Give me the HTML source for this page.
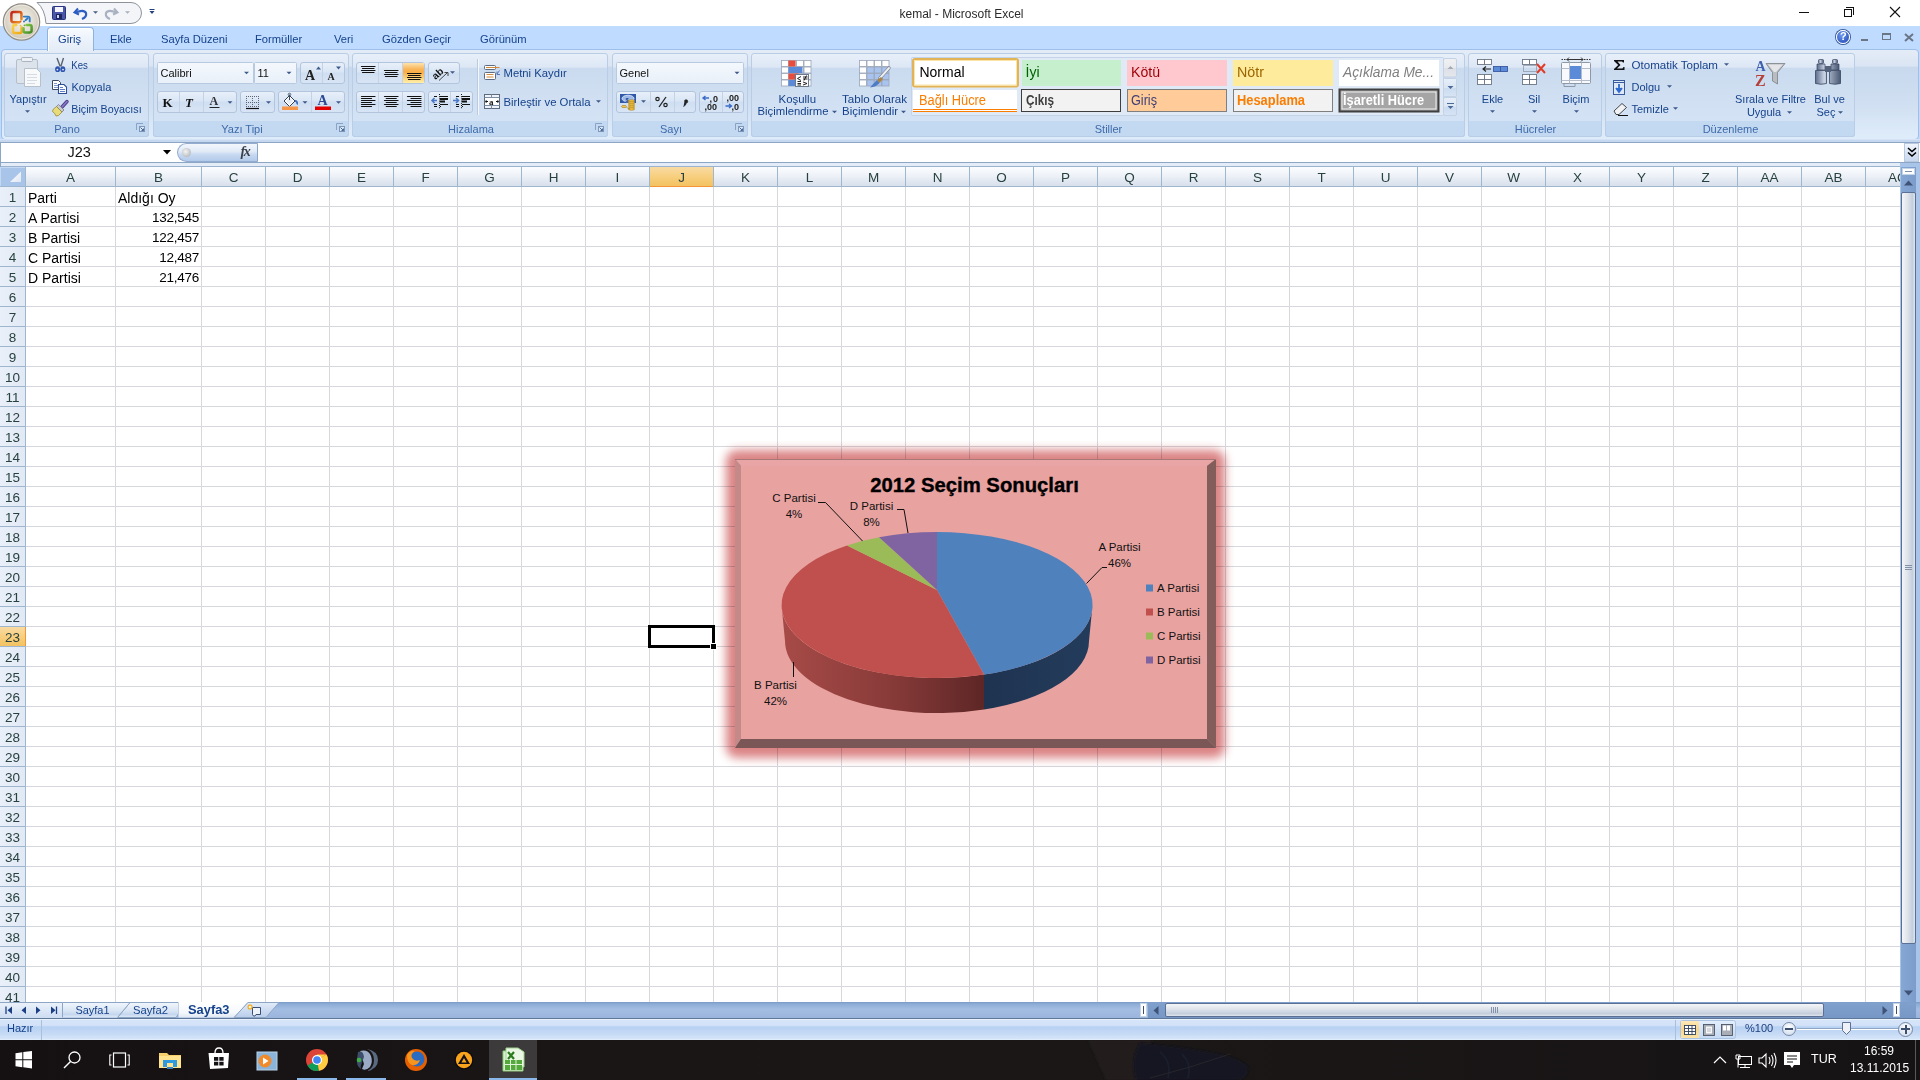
<!DOCTYPE html>
<html><head><meta charset="utf-8"><title>kemal - Microsoft Excel</title>
<style>
*{margin:0;padding:0;box-sizing:border-box}
html,body{width:1920px;height:1080px;overflow:hidden;background:#fff;font-family:"Liberation Sans",sans-serif;}
.a{position:absolute}
.t{position:absolute;white-space:nowrap;line-height:1}
.ui{font-size:11px;color:#15428b}
.grp{border:1px solid #b9cde6;border-radius:3px;background:linear-gradient(#e7eff9 0,#dde7f5 16%,#cbdbef 17.5%,#d2e1f3 70%,#d6e5f6 100%)}
.glab{border:1px solid #b9cde6;border-top:none;border-radius:0 0 3px 3px;background:#c3d9f1}
.hdr{font-size:13.5px;color:#27413e}
.cell{font-size:14px;color:#000}
.num{font-size:13.5px;letter-spacing:-0.25px}

</style></head><body>
<!-- title bar -->
<div class="a" style="left:0;top:0;width:1920px;height:26px;background:#fff"></div>
<!-- QAT capsule -->


<!-- window buttons -->
<div class="a" style="left:1799px;top:12px;width:10px;height:1px;background:#111"></div>
<div class="a" style="left:1844px;top:9px;width:8px;height:8px;border:1px solid #111;"></div>
<div class="a" style="left:1846px;top:7px;width:8px;height:8px;border-top:1px solid #111;border-right:1px solid #111"></div>
<svg class="a" style="left:1889px;top:6px" width="12" height="12"><path d="M1 1L11 11M11 1L1 11" stroke="#111" stroke-width="1.1"/></svg>
<!-- tab strip -->
<div class="a" style="left:0;top:26px;width:1920px;height:24px;background:#bfdbff"></div>
<div class="t ui" style="left:110px;top:34px;font-size:11.2px">Ekle</div>
<div class="t ui" style="left:161px;top:34px;font-size:11.2px">Sayfa Düzeni</div>
<div class="t ui" style="left:255px;top:34px;font-size:11.2px">Formüller</div>
<div class="t ui" style="left:334px;top:34px;font-size:11.2px">Veri</div>
<div class="t ui" style="left:382px;top:34px;font-size:11.2px">Gözden Geçir</div>
<div class="t ui" style="left:480px;top:34px;font-size:11.2px">Görünüm</div>
<!-- right mini buttons -->
<div class="a" style="left:1836px;top:30px;width:14px;height:14px;border-radius:50%;background:radial-gradient(circle at 40% 35%,#6d9cf0,#1a3fb0);border:1px solid #fff;box-shadow:0 0 0 1px #3a5a9a"></div>
<div class="t" style="left:1840px;top:31px;font-size:11px;font-weight:bold;color:#fff">?</div>
<div class="a" style="left:1861px;top:39px;width:7px;height:2px;background:#6a7585"></div>
<div class="a" style="left:1882px;top:33px;width:9px;height:7px;border:1px solid #6a7585;border-top-width:2px"></div>
<svg class="a" style="left:1904px;top:33px" width="10" height="9"><path d="M1 1L9 8M9 1L1 8" stroke="#6a7585" stroke-width="2"/></svg>
<!-- ribbon panel -->
<div class="a" style="left:0;top:49px;width:1920px;height:93px;background:#bfdbff"></div>
<div class="a" style="left:1px;top:49px;width:1918px;height:91px;border:1px solid #9ebfe9;border-radius:4px;background:linear-gradient(#e4ecf7 0,#dae5f3 18%,#c8d9ee 19.5%,#d0dff1 60%,#dfedfb 100%)"></div>
<div class="a" style="left:0;top:139px;width:1920px;height:3px;background:#d4e3f6"></div>
<div class="a" style="left:47px;top:27px;width:47px;height:24px;border:1px solid #8fb3e0;border-bottom:none;border-radius:4px 4px 0 0;background:linear-gradient(#f7fbff,#eaf1fa 60%,#e4ecf7);box-shadow:inset 1px 1px 0 #fff"></div>
<div class="t ui" style="left:58px;top:34px;font-size:11.2px">Giriş</div>
<div class="a grp" style="left:4px;top:53px;width:145px;height:84px"></div>
<div class="a glab" style="left:4px;top:121px;width:145px;height:16px"></div>
<div class="t ui" style="left:7px;top:124px;width:120px;text-align:center;color:#3e6aaa;font-size:11px">Pano</div>
<svg class="a" style="left:136px;top:123px" width="9" height="9"><path d="M0.5 7V0.5H7" fill="none" stroke="#8aa3c4"/><rect x="3.5" y="3.5" width="5" height="5" fill="#dce7f5" stroke="#7d97bb"/><path d="M4.5 4.5L7.5 7.5M7.5 5.5V7.5H5.5" fill="none" stroke="#4a6a9a"/></svg>
<div class="a grp" style="left:153px;top:53px;width:196px;height:84px"></div>
<div class="a glab" style="left:153px;top:121px;width:196px;height:16px"></div>
<div class="t ui" style="left:182px;top:124px;width:120px;text-align:center;color:#3e6aaa;font-size:11px">Yazı Tipi</div>
<svg class="a" style="left:336px;top:123px" width="9" height="9"><path d="M0.5 7V0.5H7" fill="none" stroke="#8aa3c4"/><rect x="3.5" y="3.5" width="5" height="5" fill="#dce7f5" stroke="#7d97bb"/><path d="M4.5 4.5L7.5 7.5M7.5 5.5V7.5H5.5" fill="none" stroke="#4a6a9a"/></svg>
<div class="a grp" style="left:352px;top:53px;width:256px;height:84px"></div>
<div class="a glab" style="left:352px;top:121px;width:256px;height:16px"></div>
<div class="t ui" style="left:411px;top:124px;width:120px;text-align:center;color:#3e6aaa;font-size:11px">Hizalama</div>
<svg class="a" style="left:595px;top:123px" width="9" height="9"><path d="M0.5 7V0.5H7" fill="none" stroke="#8aa3c4"/><rect x="3.5" y="3.5" width="5" height="5" fill="#dce7f5" stroke="#7d97bb"/><path d="M4.5 4.5L7.5 7.5M7.5 5.5V7.5H5.5" fill="none" stroke="#4a6a9a"/></svg>
<div class="a grp" style="left:612px;top:53px;width:136px;height:84px"></div>
<div class="a glab" style="left:612px;top:121px;width:136px;height:16px"></div>
<div class="t ui" style="left:611px;top:124px;width:120px;text-align:center;color:#3e6aaa;font-size:11px">Sayı</div>
<svg class="a" style="left:735px;top:123px" width="9" height="9"><path d="M0.5 7V0.5H7" fill="none" stroke="#8aa3c4"/><rect x="3.5" y="3.5" width="5" height="5" fill="#dce7f5" stroke="#7d97bb"/><path d="M4.5 4.5L7.5 7.5M7.5 5.5V7.5H5.5" fill="none" stroke="#4a6a9a"/></svg>
<div class="a grp" style="left:751px;top:53px;width:714px;height:84px"></div>
<div class="a glab" style="left:751px;top:121px;width:714px;height:16px"></div>
<div class="t ui" style="left:1048.5px;top:124px;width:120px;text-align:center;color:#3e6aaa;font-size:11px">Stiller</div>
<div class="a grp" style="left:1468px;top:53px;width:134px;height:84px"></div>
<div class="a glab" style="left:1468px;top:121px;width:134px;height:16px"></div>
<div class="t ui" style="left:1475.5px;top:124px;width:120px;text-align:center;color:#3e6aaa;font-size:11px">Hücreler</div>
<div class="a grp" style="left:1605px;top:53px;width:250px;height:84px"></div>
<div class="a glab" style="left:1605px;top:121px;width:250px;height:16px"></div>
<div class="t ui" style="left:1670.5px;top:124px;width:120px;text-align:center;color:#3e6aaa;font-size:11px">Düzenleme</div>
<!-- formula bar -->
<div class="a" style="left:0;top:140px;width:1920px;height:27px;background:#c5d8ef"></div>
<div class="a" style="left:0;top:142px;width:1920px;height:21px;background:#fff;border-top:1px solid #8ea6c5;border-bottom:1px solid #8ea6c5"></div>
<div class="a" style="left:0;top:163px;width:1920px;height:4px;background:#e3ecf7;border-bottom:1px solid #9cb3cf"></div>
<div class="t" style="left:67.5px;top:145px;font-size:14.5px;color:#111">J23</div>
<div class="a" style="left:0;top:142px;width:1px;height:25px;background:#8ea6c5"></div>
<svg class="a" style="left:163px;top:150px" width="9" height="5"><path d="M0 0H8L4 4.5Z" fill="#000"/></svg>
<div class="a" style="left:177px;top:143px;width:81px;height:19px;border-radius:10px 0 0 10px;border:1px solid #93acd0;border-right:1px solid #8ca6c8;background:linear-gradient(#f3f7fc,#e0eaf7 45%,#c9daf1 60%,#b2caeb)"></div>
<div class="a" style="left:182px;top:148px;width:9px;height:9px;border-radius:50%;background:radial-gradient(circle at 40% 40%,#f4f4f4,#a4a9ae)"></div>
<div class="t" style="left:240.5px;top:145px;font-family:'Liberation Serif',serif;font-style:italic;font-weight:bold;font-size:14px;color:#3a3f48;letter-spacing:-1.5px">fx</div>
<div class="a" style="left:1904px;top:143px;width:15px;height:19px;border:1px solid #b8c9df;background:linear-gradient(#f0f5fb,#c8d8ee)"></div>
<svg class="a" style="left:1907px;top:147px" width="10" height="11"><path d="M1 1L5 4.5L9 1M1 5.5L5 9L9 5.5" fill="none" stroke="#000" stroke-width="1.6"/></svg>
<div class="a" style="left:0;top:167px;width:1900px;height:20px;background:linear-gradient(#fbfcfe,#eef2f8 45%,#dfe6f0 80%,#d8e0ec);border-bottom:1px solid #9eb6ce"></div>
<div class="a" style="left:0;top:167px;width:26px;height:20px;background:#a9c4e9;border-right:1px solid #9eb6ce;border-bottom:1px solid #9eb6ce;box-shadow:inset 1px 1px 0 #c5d8f3"></div>
<svg class="a" style="left:9px;top:171px" width="13" height="12"><defs><linearGradient id="cg" x1="0" y1="0" x2="1" y2="1"><stop offset="0" stop-color="#fff"/><stop offset="1" stop-color="#dfe6f2"/></linearGradient></defs><path d="M12 0.5V11H1Z" fill="url(#cg)"/></svg>
<div class="a" style="left:26px;top:187px;width:1874px;height:815px;background:#fff"></div>
<div class="a" style="left:115px;top:167px;width:1px;height:20px;background:#9eb6ce"></div>
<div class="t hdr" style="left:26px;top:171px;width:89px;text-align:center">A</div>
<div class="a" style="left:115px;top:187px;width:1px;height:815px;background:#d6d8de"></div>
<div class="a" style="left:201px;top:167px;width:1px;height:20px;background:#9eb6ce"></div>
<div class="t hdr" style="left:116px;top:171px;width:85px;text-align:center">B</div>
<div class="a" style="left:201px;top:187px;width:1px;height:815px;background:#d6d8de"></div>
<div class="a" style="left:265px;top:167px;width:1px;height:20px;background:#9eb6ce"></div>
<div class="t hdr" style="left:202px;top:171px;width:63px;text-align:center">C</div>
<div class="a" style="left:265px;top:187px;width:1px;height:815px;background:#d6d8de"></div>
<div class="a" style="left:329px;top:167px;width:1px;height:20px;background:#9eb6ce"></div>
<div class="t hdr" style="left:266px;top:171px;width:63px;text-align:center">D</div>
<div class="a" style="left:329px;top:187px;width:1px;height:815px;background:#d6d8de"></div>
<div class="a" style="left:393px;top:167px;width:1px;height:20px;background:#9eb6ce"></div>
<div class="t hdr" style="left:330px;top:171px;width:63px;text-align:center">E</div>
<div class="a" style="left:393px;top:187px;width:1px;height:815px;background:#d6d8de"></div>
<div class="a" style="left:457px;top:167px;width:1px;height:20px;background:#9eb6ce"></div>
<div class="t hdr" style="left:394px;top:171px;width:63px;text-align:center">F</div>
<div class="a" style="left:457px;top:187px;width:1px;height:815px;background:#d6d8de"></div>
<div class="a" style="left:521px;top:167px;width:1px;height:20px;background:#9eb6ce"></div>
<div class="t hdr" style="left:458px;top:171px;width:63px;text-align:center">G</div>
<div class="a" style="left:521px;top:187px;width:1px;height:815px;background:#d6d8de"></div>
<div class="a" style="left:585px;top:167px;width:1px;height:20px;background:#9eb6ce"></div>
<div class="t hdr" style="left:522px;top:171px;width:63px;text-align:center">H</div>
<div class="a" style="left:585px;top:187px;width:1px;height:815px;background:#d6d8de"></div>
<div class="a" style="left:649px;top:167px;width:1px;height:20px;background:#9eb6ce"></div>
<div class="t hdr" style="left:586px;top:171px;width:63px;text-align:center">I</div>
<div class="a" style="left:649px;top:187px;width:1px;height:815px;background:#d6d8de"></div>
<div class="a" style="left:650px;top:167px;width:63px;height:19px;background:linear-gradient(#f9dba3,#f7cf7f 50%,#f3c262);"></div>
<div class="a" style="left:650px;top:186px;width:63px;height:1px;background:#f29536"></div>
<div class="a" style="left:713px;top:167px;width:1px;height:20px;background:#9eb6ce"></div>
<div class="t hdr" style="left:650px;top:171px;width:63px;text-align:center">J</div>
<div class="a" style="left:713px;top:187px;width:1px;height:815px;background:#d6d8de"></div>
<div class="a" style="left:777px;top:167px;width:1px;height:20px;background:#9eb6ce"></div>
<div class="t hdr" style="left:714px;top:171px;width:63px;text-align:center">K</div>
<div class="a" style="left:777px;top:187px;width:1px;height:815px;background:#d6d8de"></div>
<div class="a" style="left:841px;top:167px;width:1px;height:20px;background:#9eb6ce"></div>
<div class="t hdr" style="left:778px;top:171px;width:63px;text-align:center">L</div>
<div class="a" style="left:841px;top:187px;width:1px;height:815px;background:#d6d8de"></div>
<div class="a" style="left:905px;top:167px;width:1px;height:20px;background:#9eb6ce"></div>
<div class="t hdr" style="left:842px;top:171px;width:63px;text-align:center">M</div>
<div class="a" style="left:905px;top:187px;width:1px;height:815px;background:#d6d8de"></div>
<div class="a" style="left:969px;top:167px;width:1px;height:20px;background:#9eb6ce"></div>
<div class="t hdr" style="left:906px;top:171px;width:63px;text-align:center">N</div>
<div class="a" style="left:969px;top:187px;width:1px;height:815px;background:#d6d8de"></div>
<div class="a" style="left:1033px;top:167px;width:1px;height:20px;background:#9eb6ce"></div>
<div class="t hdr" style="left:970px;top:171px;width:63px;text-align:center">O</div>
<div class="a" style="left:1033px;top:187px;width:1px;height:815px;background:#d6d8de"></div>
<div class="a" style="left:1097px;top:167px;width:1px;height:20px;background:#9eb6ce"></div>
<div class="t hdr" style="left:1034px;top:171px;width:63px;text-align:center">P</div>
<div class="a" style="left:1097px;top:187px;width:1px;height:815px;background:#d6d8de"></div>
<div class="a" style="left:1161px;top:167px;width:1px;height:20px;background:#9eb6ce"></div>
<div class="t hdr" style="left:1098px;top:171px;width:63px;text-align:center">Q</div>
<div class="a" style="left:1161px;top:187px;width:1px;height:815px;background:#d6d8de"></div>
<div class="a" style="left:1225px;top:167px;width:1px;height:20px;background:#9eb6ce"></div>
<div class="t hdr" style="left:1162px;top:171px;width:63px;text-align:center">R</div>
<div class="a" style="left:1225px;top:187px;width:1px;height:815px;background:#d6d8de"></div>
<div class="a" style="left:1289px;top:167px;width:1px;height:20px;background:#9eb6ce"></div>
<div class="t hdr" style="left:1226px;top:171px;width:63px;text-align:center">S</div>
<div class="a" style="left:1289px;top:187px;width:1px;height:815px;background:#d6d8de"></div>
<div class="a" style="left:1353px;top:167px;width:1px;height:20px;background:#9eb6ce"></div>
<div class="t hdr" style="left:1290px;top:171px;width:63px;text-align:center">T</div>
<div class="a" style="left:1353px;top:187px;width:1px;height:815px;background:#d6d8de"></div>
<div class="a" style="left:1417px;top:167px;width:1px;height:20px;background:#9eb6ce"></div>
<div class="t hdr" style="left:1354px;top:171px;width:63px;text-align:center">U</div>
<div class="a" style="left:1417px;top:187px;width:1px;height:815px;background:#d6d8de"></div>
<div class="a" style="left:1481px;top:167px;width:1px;height:20px;background:#9eb6ce"></div>
<div class="t hdr" style="left:1418px;top:171px;width:63px;text-align:center">V</div>
<div class="a" style="left:1481px;top:187px;width:1px;height:815px;background:#d6d8de"></div>
<div class="a" style="left:1545px;top:167px;width:1px;height:20px;background:#9eb6ce"></div>
<div class="t hdr" style="left:1482px;top:171px;width:63px;text-align:center">W</div>
<div class="a" style="left:1545px;top:187px;width:1px;height:815px;background:#d6d8de"></div>
<div class="a" style="left:1609px;top:167px;width:1px;height:20px;background:#9eb6ce"></div>
<div class="t hdr" style="left:1546px;top:171px;width:63px;text-align:center">X</div>
<div class="a" style="left:1609px;top:187px;width:1px;height:815px;background:#d6d8de"></div>
<div class="a" style="left:1673px;top:167px;width:1px;height:20px;background:#9eb6ce"></div>
<div class="t hdr" style="left:1610px;top:171px;width:63px;text-align:center">Y</div>
<div class="a" style="left:1673px;top:187px;width:1px;height:815px;background:#d6d8de"></div>
<div class="a" style="left:1737px;top:167px;width:1px;height:20px;background:#9eb6ce"></div>
<div class="t hdr" style="left:1674px;top:171px;width:63px;text-align:center">Z</div>
<div class="a" style="left:1737px;top:187px;width:1px;height:815px;background:#d6d8de"></div>
<div class="a" style="left:1801px;top:167px;width:1px;height:20px;background:#9eb6ce"></div>
<div class="t hdr" style="left:1738px;top:171px;width:63px;text-align:center">AA</div>
<div class="a" style="left:1801px;top:187px;width:1px;height:815px;background:#d6d8de"></div>
<div class="a" style="left:1865px;top:167px;width:1px;height:20px;background:#9eb6ce"></div>
<div class="t hdr" style="left:1802px;top:171px;width:63px;text-align:center">AB</div>
<div class="a" style="left:1865px;top:187px;width:1px;height:815px;background:#d6d8de"></div>
<div class="a" style="left:1929px;top:167px;width:1px;height:20px;background:#9eb6ce"></div>
<div class="t hdr" style="left:1866px;top:171px;width:63px;text-align:center">AC</div>
<div class="a" style="left:1929px;top:187px;width:1px;height:815px;background:#d6d8de"></div>
<div class="a" style="left:0;top:187px;width:26px;height:815px;background:linear-gradient(90deg,#eaf0f9,#e1e9f5);border-right:1px solid #9eb6ce"></div>
<div class="a" style="left:0;top:206px;width:25px;height:1px;background:#9eb6ce"></div>
<div class="a" style="left:26px;top:206px;width:1874px;height:1px;background:#d6d8de"></div>
<div class="t hdr" style="left:0;top:191px;width:25px;text-align:center">1</div>
<div class="a" style="left:0;top:226px;width:25px;height:1px;background:#9eb6ce"></div>
<div class="a" style="left:26px;top:226px;width:1874px;height:1px;background:#d6d8de"></div>
<div class="t hdr" style="left:0;top:211px;width:25px;text-align:center">2</div>
<div class="a" style="left:0;top:246px;width:25px;height:1px;background:#9eb6ce"></div>
<div class="a" style="left:26px;top:246px;width:1874px;height:1px;background:#d6d8de"></div>
<div class="t hdr" style="left:0;top:231px;width:25px;text-align:center">3</div>
<div class="a" style="left:0;top:266px;width:25px;height:1px;background:#9eb6ce"></div>
<div class="a" style="left:26px;top:266px;width:1874px;height:1px;background:#d6d8de"></div>
<div class="t hdr" style="left:0;top:251px;width:25px;text-align:center">4</div>
<div class="a" style="left:0;top:286px;width:25px;height:1px;background:#9eb6ce"></div>
<div class="a" style="left:26px;top:286px;width:1874px;height:1px;background:#d6d8de"></div>
<div class="t hdr" style="left:0;top:271px;width:25px;text-align:center">5</div>
<div class="a" style="left:0;top:306px;width:25px;height:1px;background:#9eb6ce"></div>
<div class="a" style="left:26px;top:306px;width:1874px;height:1px;background:#d6d8de"></div>
<div class="t hdr" style="left:0;top:291px;width:25px;text-align:center">6</div>
<div class="a" style="left:0;top:326px;width:25px;height:1px;background:#9eb6ce"></div>
<div class="a" style="left:26px;top:326px;width:1874px;height:1px;background:#d6d8de"></div>
<div class="t hdr" style="left:0;top:311px;width:25px;text-align:center">7</div>
<div class="a" style="left:0;top:346px;width:25px;height:1px;background:#9eb6ce"></div>
<div class="a" style="left:26px;top:346px;width:1874px;height:1px;background:#d6d8de"></div>
<div class="t hdr" style="left:0;top:331px;width:25px;text-align:center">8</div>
<div class="a" style="left:0;top:366px;width:25px;height:1px;background:#9eb6ce"></div>
<div class="a" style="left:26px;top:366px;width:1874px;height:1px;background:#d6d8de"></div>
<div class="t hdr" style="left:0;top:351px;width:25px;text-align:center">9</div>
<div class="a" style="left:0;top:386px;width:25px;height:1px;background:#9eb6ce"></div>
<div class="a" style="left:26px;top:386px;width:1874px;height:1px;background:#d6d8de"></div>
<div class="t hdr" style="left:0;top:371px;width:25px;text-align:center">10</div>
<div class="a" style="left:0;top:406px;width:25px;height:1px;background:#9eb6ce"></div>
<div class="a" style="left:26px;top:406px;width:1874px;height:1px;background:#d6d8de"></div>
<div class="t hdr" style="left:0;top:391px;width:25px;text-align:center">11</div>
<div class="a" style="left:0;top:426px;width:25px;height:1px;background:#9eb6ce"></div>
<div class="a" style="left:26px;top:426px;width:1874px;height:1px;background:#d6d8de"></div>
<div class="t hdr" style="left:0;top:411px;width:25px;text-align:center">12</div>
<div class="a" style="left:0;top:446px;width:25px;height:1px;background:#9eb6ce"></div>
<div class="a" style="left:26px;top:446px;width:1874px;height:1px;background:#d6d8de"></div>
<div class="t hdr" style="left:0;top:431px;width:25px;text-align:center">13</div>
<div class="a" style="left:0;top:466px;width:25px;height:1px;background:#9eb6ce"></div>
<div class="a" style="left:26px;top:466px;width:1874px;height:1px;background:#d6d8de"></div>
<div class="t hdr" style="left:0;top:451px;width:25px;text-align:center">14</div>
<div class="a" style="left:0;top:486px;width:25px;height:1px;background:#9eb6ce"></div>
<div class="a" style="left:26px;top:486px;width:1874px;height:1px;background:#d6d8de"></div>
<div class="t hdr" style="left:0;top:471px;width:25px;text-align:center">15</div>
<div class="a" style="left:0;top:506px;width:25px;height:1px;background:#9eb6ce"></div>
<div class="a" style="left:26px;top:506px;width:1874px;height:1px;background:#d6d8de"></div>
<div class="t hdr" style="left:0;top:491px;width:25px;text-align:center">16</div>
<div class="a" style="left:0;top:526px;width:25px;height:1px;background:#9eb6ce"></div>
<div class="a" style="left:26px;top:526px;width:1874px;height:1px;background:#d6d8de"></div>
<div class="t hdr" style="left:0;top:511px;width:25px;text-align:center">17</div>
<div class="a" style="left:0;top:546px;width:25px;height:1px;background:#9eb6ce"></div>
<div class="a" style="left:26px;top:546px;width:1874px;height:1px;background:#d6d8de"></div>
<div class="t hdr" style="left:0;top:531px;width:25px;text-align:center">18</div>
<div class="a" style="left:0;top:566px;width:25px;height:1px;background:#9eb6ce"></div>
<div class="a" style="left:26px;top:566px;width:1874px;height:1px;background:#d6d8de"></div>
<div class="t hdr" style="left:0;top:551px;width:25px;text-align:center">19</div>
<div class="a" style="left:0;top:586px;width:25px;height:1px;background:#9eb6ce"></div>
<div class="a" style="left:26px;top:586px;width:1874px;height:1px;background:#d6d8de"></div>
<div class="t hdr" style="left:0;top:571px;width:25px;text-align:center">20</div>
<div class="a" style="left:0;top:606px;width:25px;height:1px;background:#9eb6ce"></div>
<div class="a" style="left:26px;top:606px;width:1874px;height:1px;background:#d6d8de"></div>
<div class="t hdr" style="left:0;top:591px;width:25px;text-align:center">21</div>
<div class="a" style="left:0;top:626px;width:25px;height:1px;background:#9eb6ce"></div>
<div class="a" style="left:26px;top:626px;width:1874px;height:1px;background:#d6d8de"></div>
<div class="t hdr" style="left:0;top:611px;width:25px;text-align:center">22</div>
<div class="a" style="left:0;top:627px;width:25px;height:19px;background:linear-gradient(#f9dba3,#f7cf7f 50%,#f3c262)"></div>
<div class="a" style="left:25px;top:627px;width:1px;height:19px;background:#f29536"></div>
<div class="a" style="left:0;top:646px;width:25px;height:1px;background:#9eb6ce"></div>
<div class="a" style="left:26px;top:646px;width:1874px;height:1px;background:#d6d8de"></div>
<div class="t hdr" style="left:0;top:631px;width:25px;text-align:center">23</div>
<div class="a" style="left:0;top:666px;width:25px;height:1px;background:#9eb6ce"></div>
<div class="a" style="left:26px;top:666px;width:1874px;height:1px;background:#d6d8de"></div>
<div class="t hdr" style="left:0;top:651px;width:25px;text-align:center">24</div>
<div class="a" style="left:0;top:686px;width:25px;height:1px;background:#9eb6ce"></div>
<div class="a" style="left:26px;top:686px;width:1874px;height:1px;background:#d6d8de"></div>
<div class="t hdr" style="left:0;top:671px;width:25px;text-align:center">25</div>
<div class="a" style="left:0;top:706px;width:25px;height:1px;background:#9eb6ce"></div>
<div class="a" style="left:26px;top:706px;width:1874px;height:1px;background:#d6d8de"></div>
<div class="t hdr" style="left:0;top:691px;width:25px;text-align:center">26</div>
<div class="a" style="left:0;top:726px;width:25px;height:1px;background:#9eb6ce"></div>
<div class="a" style="left:26px;top:726px;width:1874px;height:1px;background:#d6d8de"></div>
<div class="t hdr" style="left:0;top:711px;width:25px;text-align:center">27</div>
<div class="a" style="left:0;top:746px;width:25px;height:1px;background:#9eb6ce"></div>
<div class="a" style="left:26px;top:746px;width:1874px;height:1px;background:#d6d8de"></div>
<div class="t hdr" style="left:0;top:731px;width:25px;text-align:center">28</div>
<div class="a" style="left:0;top:766px;width:25px;height:1px;background:#9eb6ce"></div>
<div class="a" style="left:26px;top:766px;width:1874px;height:1px;background:#d6d8de"></div>
<div class="t hdr" style="left:0;top:751px;width:25px;text-align:center">29</div>
<div class="a" style="left:0;top:786px;width:25px;height:1px;background:#9eb6ce"></div>
<div class="a" style="left:26px;top:786px;width:1874px;height:1px;background:#d6d8de"></div>
<div class="t hdr" style="left:0;top:771px;width:25px;text-align:center">30</div>
<div class="a" style="left:0;top:806px;width:25px;height:1px;background:#9eb6ce"></div>
<div class="a" style="left:26px;top:806px;width:1874px;height:1px;background:#d6d8de"></div>
<div class="t hdr" style="left:0;top:791px;width:25px;text-align:center">31</div>
<div class="a" style="left:0;top:826px;width:25px;height:1px;background:#9eb6ce"></div>
<div class="a" style="left:26px;top:826px;width:1874px;height:1px;background:#d6d8de"></div>
<div class="t hdr" style="left:0;top:811px;width:25px;text-align:center">32</div>
<div class="a" style="left:0;top:846px;width:25px;height:1px;background:#9eb6ce"></div>
<div class="a" style="left:26px;top:846px;width:1874px;height:1px;background:#d6d8de"></div>
<div class="t hdr" style="left:0;top:831px;width:25px;text-align:center">33</div>
<div class="a" style="left:0;top:866px;width:25px;height:1px;background:#9eb6ce"></div>
<div class="a" style="left:26px;top:866px;width:1874px;height:1px;background:#d6d8de"></div>
<div class="t hdr" style="left:0;top:851px;width:25px;text-align:center">34</div>
<div class="a" style="left:0;top:886px;width:25px;height:1px;background:#9eb6ce"></div>
<div class="a" style="left:26px;top:886px;width:1874px;height:1px;background:#d6d8de"></div>
<div class="t hdr" style="left:0;top:871px;width:25px;text-align:center">35</div>
<div class="a" style="left:0;top:906px;width:25px;height:1px;background:#9eb6ce"></div>
<div class="a" style="left:26px;top:906px;width:1874px;height:1px;background:#d6d8de"></div>
<div class="t hdr" style="left:0;top:891px;width:25px;text-align:center">36</div>
<div class="a" style="left:0;top:926px;width:25px;height:1px;background:#9eb6ce"></div>
<div class="a" style="left:26px;top:926px;width:1874px;height:1px;background:#d6d8de"></div>
<div class="t hdr" style="left:0;top:911px;width:25px;text-align:center">37</div>
<div class="a" style="left:0;top:946px;width:25px;height:1px;background:#9eb6ce"></div>
<div class="a" style="left:26px;top:946px;width:1874px;height:1px;background:#d6d8de"></div>
<div class="t hdr" style="left:0;top:931px;width:25px;text-align:center">38</div>
<div class="a" style="left:0;top:966px;width:25px;height:1px;background:#9eb6ce"></div>
<div class="a" style="left:26px;top:966px;width:1874px;height:1px;background:#d6d8de"></div>
<div class="t hdr" style="left:0;top:951px;width:25px;text-align:center">39</div>
<div class="a" style="left:0;top:986px;width:25px;height:1px;background:#9eb6ce"></div>
<div class="a" style="left:26px;top:986px;width:1874px;height:1px;background:#d6d8de"></div>
<div class="t hdr" style="left:0;top:971px;width:25px;text-align:center">40</div>
<div class="t hdr" style="left:0;top:991px;width:25px;text-align:center">41</div>
<div class="t cell" style="left:28px;top:191px">Parti</div>
<div class="t cell" style="left:118px;top:191px">Aldığı Oy</div>
<div class="t cell" style="left:28px;top:211px">A Partisi</div>
<div class="t cell" style="left:28px;top:231px">B Partisi</div>
<div class="t cell" style="left:28px;top:251px">C Partisi</div>
<div class="t cell" style="left:28px;top:271px">D Partisi</div>
<div class="t cell num" style="left:115px;width:84px;text-align:right;top:211px">132,545</div>
<div class="t cell num" style="left:115px;width:84px;text-align:right;top:231px">122,457</div>
<div class="t cell num" style="left:115px;width:84px;text-align:right;top:251px">12,487</div>
<div class="t cell num" style="left:115px;width:84px;text-align:right;top:271px">21,476</div>
<!-- selection J23 -->
<div class="a" style="left:648px;top:625px;width:67px;height:23px;border:3px solid #000"></div>
<div class="a" style="left:710px;top:643px;width:7px;height:7px;background:#fff"></div>
<div class="a" style="left:711px;top:644px;width:5px;height:5px;background:#000"></div>
<!-- clip header overflow / vertical scrollbar -->
<div class="a" style="left:1900px;top:163px;width:20px;height:855px;background:#a9c4e9"></div>
<div class="a" style="left:1901px;top:167px;width:15px;height:835px;background:linear-gradient(90deg,#86a6d4,#7c9ccb)"></div>
<div class="a" style="left:1902px;top:168px;width:13px;height:7px;background:#fff;border:1px solid #c6d4e6"></div>
<div class="a" style="left:1905px;top:171px;width:7px;height:1px;background:#7d8ea8"></div>
<svg class="a" style="left:1904px;top:180px" width="10" height="6"><path d="M0 5.5L4.5 0.5L9 5.5Z" fill="#3f5377"/></svg>
<div class="a" style="left:1901px;top:192px;width:15px;height:752px;border:1px solid #5c7093;border-radius:2px;background:linear-gradient(90deg,#f3f5f8,#e0e5ec 40%,#c4cedc 80%,#dfe5ee)"></div>
<div class="a" style="left:1905px;top:565px;width:7px;height:6px;background:repeating-linear-gradient(#8392a8 0 1px,transparent 1px 2px)"></div>
<svg class="a" style="left:1904px;top:990px" width="10" height="6"><path d="M0 0.5L4.5 5.5L9 0.5Z" fill="#3f5377"/></svg>
<!-- sheet tab bar -->
<div class="a" style="left:0;top:1002px;width:1920px;height:17px;background:linear-gradient(#7b99c6 0,#8cacd6 12%,#a3bde2 45%,#9bb4dc 100%);border-bottom:1px solid #5f7799"></div>
<div class="a" style="left:0;top:1002px;width:63px;height:16px;background:linear-gradient(#eaf1fa,#cddcf1);border-top:1px solid #8ea6c5"></div>
<svg class="a" style="left:5px;top:1006px" width="58" height="9"><path d="M1 0.5V8" stroke="#1a3f85" stroke-width="1.3"/><path d="M7 0.5L2.5 4.25L7 8Z" fill="#1a3f85"/><path d="M21 0.5L16.5 4.25L21 8Z" fill="#1a3f85"/><path d="M31 0.5L35.5 4.25L31 8Z" fill="#1a3f85"/><path d="M46 0.5L50.5 4.25L46 8Z" fill="#1a3f85"/><path d="M51.5 0.5V8" stroke="#1a3f85" stroke-width="1.3"/></svg>
<svg class="a" style="left:0;top:995px" width="300" height="25" viewBox="0 995 300 25" font-family="Liberation Sans, sans-serif">
<defs><linearGradient id="tg" x1="0" y1="0" x2="0" y2="1"><stop offset="0" stop-color="#f1f6fc"/><stop offset="0.55" stop-color="#d9e5f4"/><stop offset="0.8" stop-color="#c5d6ee"/><stop offset="1" stop-color="#e0ebf8"/></linearGradient>
<linearGradient id="ag" x1="0" y1="0" x2="0" y2="1"><stop offset="0" stop-color="#ffffff"/><stop offset="0.7" stop-color="#f4f7fb"/><stop offset="1" stop-color="#dfe7f2"/></linearGradient>
<linearGradient id="ng" x1="0" y1="0" x2="0" y2="1"><stop offset="0" stop-color="#e2ecf9"/><stop offset="1" stop-color="#b9cdea"/></linearGradient></defs>
<path d="M130 1002.5H178.5V1014L176 1017.5H117.5Z" fill="url(#tg)" stroke="#8ea6c5"/>
<path d="M62.5 1017.5V1002.5H130L117.5 1017.5" fill="url(#tg)" stroke="#8ea6c5"/>
<path d="M247.5 1002.5H279L266 1017.5H234Z" fill="url(#ng)" stroke="#8ea6c5"/>
<path d="M178.5 1002H248L234 1017.5H178.5Z" fill="url(#ag)"/>
<path d="M248 1002.5L234 1017.5" stroke="#8ea6c5"/>
<text x="75.5" y="1014.3" font-size="11.5" fill="#15428b" textLength="34" lengthAdjust="spacingAndGlyphs">Sayfa1</text>
<text x="133" y="1014.3" font-size="11.5" fill="#15428b" textLength="35" lengthAdjust="spacingAndGlyphs">Sayfa2</text>
<text x="188" y="1014.3" font-size="12" font-weight="bold" fill="#15428b" textLength="41.5" lengthAdjust="spacingAndGlyphs">Sayfa3</text>
</svg>
<svg class="a" style="left:246px;top:1003px" width="20" height="15"><path d="M6.5 4.5H14.5V11.5H10L9 13H7.5L6.5 11.5Z" fill="#eef3fa" stroke="#3b4f74"/><path d="M4 1V7M1 4H7M2 2L6 6M6 2L2 6" stroke="#f2a81d" stroke-width="1.1"/><circle cx="4" cy="4" r="1.3" fill="#fff6c0"/></svg>
<!-- horizontal scrollbar -->
<div class="a" style="left:1140px;top:1003px;width:7px;height:14px;background:#fff;border:1px solid #c6d4e6"></div>
<div class="a" style="left:1143px;top:1006px;width:1px;height:8px;background:#3c4f6e"></div>
<div class="a" style="left:1148px;top:1003px;width:768px;height:15px;background:linear-gradient(#7f9fcc,#7797c6)"></div>
<svg class="a" style="left:1153px;top:1006px" width="6" height="9"><path d="M5.5 0L0.5 4.5L5.5 9Z" fill="#3f5377"/></svg>
<div class="a" style="left:1165px;top:1003px;width:659px;height:14px;border:1px solid #5c7093;border-radius:2px;background:linear-gradient(#f3f5f8,#e0e5ec 40%,#c4cedc 80%,#dfe5ee)"></div>
<div class="a" style="left:1491px;top:1007px;width:7px;height:6px;background:repeating-linear-gradient(90deg,#8392a8 0 1px,transparent 1px 2px)"></div>
<svg class="a" style="left:1882px;top:1006px" width="6" height="9"><path d="M0.5 0L5.5 4.5L0.5 9Z" fill="#3f5377"/></svg>
<div class="a" style="left:1893px;top:1003px;width:7px;height:14px;background:#fff;border:1px solid #c6d4e6"></div>
<div class="a" style="left:1896px;top:1006px;width:1px;height:8px;background:#3c4f6e"></div>
<!-- status bar -->
<div class="a" style="left:0;top:1019px;width:1920px;height:21px;background:linear-gradient(#f4fbff 0,#d6e4f9 6%,#d3e2f8 30%,#b7d1f3 38%,#c6daf5 70%,#d5e5f9 94%,#e4f0fd 100%)"></div>
<div class="t" style="left:7px;top:1023px;font-size:11px;color:#15428b">Hazır</div>
<div class="a" style="left:41px;top:1020px;width:1px;height:20px;background:#a9c0dd"></div>
<div class="a" style="left:1675px;top:1020px;width:1px;height:20px;background:#a9c0dd"></div>
<svg class="a" style="left:1678px;top:1019px" width="66" height="21">
<defs><linearGradient id="vg" x1="0" y1="0" x2="0" y2="1"><stop offset="0" stop-color="#e3eefb"/><stop offset="1" stop-color="#c6daf3"/></linearGradient><linearGradient id="vh" x1="0" y1="0" x2="0" y2="1"><stop offset="0" stop-color="#fde9b8"/><stop offset="0.5" stop-color="#f9d58a"/><stop offset="1" stop-color="#fbe3a6"/></linearGradient></defs>
<rect x="2.5" y="1.5" width="55" height="18" rx="2" fill="url(#vg)" stroke="#aac3e3"/>
<rect x="3" y="2" width="18" height="17" fill="url(#vh)"/>
<g fill="#fff" stroke="#2f3f58" stroke-width="0.9"><rect x="6.5" y="6.5" width="11" height="9"/></g><path d="M6.5 9.5H17.5M6.5 12.5H17.5M10.5 6.5V15.5M14 6.5V15.5" stroke="#2f3f58" stroke-width="0.9"/>
<rect x="25.5" y="5.5" width="11" height="11" fill="#a9aeb6" stroke="#4c5667" stroke-width="0.9"/><rect x="28" y="7.5" width="6" height="7" fill="#f6f7f9"/><path d="M29 10H33M29 12H33" stroke="#9aa2ae" stroke-width="0.7"/>
<rect x="43.5" y="5.5" width="11" height="11" fill="#a9aeb6" stroke="#4c5667" stroke-width="0.9"/><rect x="45" y="6.5" width="3" height="5" fill="#fff"/><rect x="49" y="6.5" width="3" height="5" fill="#fff"/>
</svg>
<div class="t" style="left:1745px;top:1023px;font-size:11px;color:#1d3f7c">%100</div>
<div class="a" style="left:1782px;top:1022px;width:14px;height:14px;border-radius:50%;border:1px solid #7488a8;background:radial-gradient(circle at 50% 35%,#fff,#c9d6e8)"></div>
<div class="a" style="left:1785px;top:1028px;width:8px;height:2px;background:#3c4f6e"></div>
<div class="a" style="left:1797px;top:1028px;width:101px;height:1px;background:#8ea6c5"></div>
<div class="a" style="left:1797px;top:1029px;width:101px;height:1px;background:#fff"></div>
<svg class="a" style="left:1842px;top:1022px" width="9" height="13"><path d="M0.5 0.5H8.5V8.5L4.5 12.5L0.5 8.5Z" fill="#eef2f8" stroke="#5c7093"/></svg>
<div class="a" style="left:1898px;top:1022px;width:15px;height:15px;border-radius:50%;border:1px solid #7488a8;background:radial-gradient(circle at 50% 35%,#fff,#c9d6e8)"></div>
<div class="a" style="left:1901px;top:1028px;width:9px;height:2px;background:#3c4f6e"></div>
<div class="a" style="left:1904.5px;top:1024.5px;width:2px;height:9px;background:#3c4f6e"></div>
<!-- taskbar -->
<div class="a" style="left:0;top:1040px;width:1920px;height:40px;background:#17131a"></div>
<div class="a" style="left:0;top:1040px;width:1920px;height:40px;background:linear-gradient(90deg,#151113,#1a1616 30%,#1b1717 60%,#161314)"></div>
<svg class="a" style="left:1060px;top:1040px" width="240" height="40"><defs><filter id="sb"><feGaussianBlur stdDeviation="1.2"/></filter></defs>
<path d="M28 0H92L82 40H46Z" fill="#201d1d" filter="url(#sb)"/>
<path d="M80 3Q115 6 148 12Q184 18 188 28Q188 40 176 40H76Q70 20 80 3Z" fill="#121520" filter="url(#sb)"/>
<path d="M90 38Q130 28 170 14" stroke="#3b3d36" stroke-width="0.8" fill="none" opacity="0.5"/>
<path d="M100 12Q112 22 108 38M122 14Q132 24 128 38" stroke="#202735" stroke-width="1.6" fill="none" opacity="0.6"/>
</svg>
<svg class="a" style="left:15px;top:1051px" width="18" height="18"><path d="M0.5 2.3L7.3 1.3V8.3H0.5ZM8.3 1.1L17 0V8.3H8.3ZM0.5 9.3H7.3V16.2L0.5 15.2ZM8.3 9.3H17V17.5L8.3 16.3Z" fill="#fff"/></svg>
<svg class="a" style="left:62px;top:1050px" width="20" height="20"><circle cx="12.5" cy="7.5" r="5.5" fill="none" stroke="#fff" stroke-width="1.3"/><path d="M8.5 11.5L2 18" stroke="#fff" stroke-width="1.4"/></svg>
<svg class="a" style="left:109px;top:1052px" width="22" height="17"><rect x="4.5" y="1" width="12" height="14" fill="none" stroke="#fff" stroke-width="1.2"/><path d="M2.5 3H0.8V13H2.5M18.5 3H20.2V13H18.5" fill="none" stroke="#fff" stroke-width="1.1"/></svg>
<svg class="a" style="left:158px;top:1050px" width="24" height="20"><path d="M1 3H9L11 5H23V18H1Z" fill="#f5d06c"/><path d="M1 6H23V18H1Z" fill="#ffe38f"/><path d="M5 17V10H19V17H15V13H9V17Z" fill="#2e9be0"/><path d="M9 17H15V19H9Z" fill="#2b7fc4"/></svg>
<svg class="a" style="left:207px;top:1047px" width="24" height="23"><path d="M8 6Q8 1 12 1Q16 1 16 6" fill="none" stroke="#fff" stroke-width="1.3"/><path d="M1.5 6H22L21 21L3 22Z" fill="#fff"/><path d="M7 10H11.3V13.8H7ZM12.3 10H16.6V13.8H12.3ZM7 14.8H11.3V18.6H7ZM12.3 14.8H16.6V18.6H12.3Z" fill="#151215"/></svg>
<svg class="a" style="left:256px;top:1051px" width="22" height="20"><rect x="1" y="1" width="20" height="18" fill="#8ab4d9" stroke="#b9d3ea"/><circle cx="9" cy="10" r="6.5" fill="#f08a2a"/><path d="M7 6.5L12.5 10L7 13.5Z" fill="#fff"/></svg>
<svg class="a" style="left:305px;top:1048px" width="24" height="24"><circle cx="12" cy="12" r="11" fill="#db4437"/><path d="M12 12L2.5 17.5A11 11 0 0 0 14 22.8Z" fill="#0f9d58"/><path d="M12 12L14 22.8A11 11 0 0 0 21.5 6.5Z" fill="#ffcd40"/><path d="M12 12L21.5 6.5H12Z" fill="#ffcd40"/><circle cx="12" cy="12" r="5" fill="#fff"/><circle cx="12" cy="12" r="3.8" fill="#4285f4"/></svg>
<svg class="a" style="left:354px;top:1048px" width="25" height="24"><path d="M13 1Q24 3 24 12Q24 21 13 23Q20 20 20 12Q20 4 13 1Z" fill="#5a6a80"/><path d="M6 3Q14 1 17 8Q19 14 16 19Q12 23 8 21L10 16Q8 12 9 9Z" fill="#9aaac4"/><path d="M4 4Q9 2 10 9L8 14Q6 18 7 21Q2 18 3 11Z" fill="#3d4e6a"/><circle cx="5" cy="12" r="2.3" fill="#3fae49"/></svg>
<svg class="a" style="left:404px;top:1048px" width="24" height="24"><circle cx="12" cy="12" r="11" fill="#e66000"/><circle cx="13" cy="11" r="7.5" fill="#2b6bc0"/><path d="M3 7Q6 2 11 3Q6 6 8 10Q11 14 16 12Q14 18 8 17Q3 15 3 7Z" fill="#f7941d"/></svg>
<svg class="a" style="left:454px;top:1050px" width="20" height="20"><circle cx="10" cy="10" r="9.5" fill="#0c0a0a"/><circle cx="10" cy="10" r="8.2" fill="#f9a41c"/><path d="M10 4L16 14H4Z" fill="#111"/><path d="M10 8L12.6 12.5H7.4Z" fill="#f9a41c"/></svg>
<div class="a" style="left:489px;top:1040px;width:48px;height:40px;background:#3d3a3b"></div>
<svg class="a" style="left:500px;top:1047px" width="26" height="25"><path d="M3 4H17L23 8V24H3Z" fill="#d9f0d0" stroke="#8fcb7a"/><path d="M6 1H18L24 5V20H6Z" fill="#eaf7e4" stroke="#9ed48a"/><path d="M5 13H22V23H5Z" fill="#54a83c"/><path d="M5 17.5H22M10.5 13V23M16 13V23" stroke="#dff3d8"/><path d="M8 5L14 12M14 5L8 12" stroke="#2c7b1f" stroke-width="2.2"/></svg>
<div class="a" style="left:297px;top:1078px;width:40px;height:2px;background:#8bb8ea"></div>
<div class="a" style="left:346px;top:1078px;width:40px;height:2px;background:#8bb8ea"></div>
<div class="a" style="left:489px;top:1078px;width:48px;height:2px;background:#8bb8ea"></div>
<!-- tray -->
<svg class="a" style="left:1713px;top:1055px" width="14" height="9"><path d="M1 8L7 2L13 8" fill="none" stroke="#fff" stroke-width="1.2"/></svg>
<svg class="a" style="left:1735px;top:1053px" width="18" height="16"><rect x="3.5" y="3.5" width="13" height="8" fill="none" stroke="#fff"/><path d="M1 2H5V6H1Z" fill="none" stroke="#fff"/><path d="M10 11.5V14.5M5 14.5H15M3 6V14.5" stroke="#fff"/></svg>
<svg class="a" style="left:1758px;top:1052px" width="19" height="17"><path d="M1 6H4L8 2V15L4 11H1Z" fill="none" stroke="#fff" stroke-width="1.1"/><path d="M11 5Q13 8.5 11 12M13.5 3Q16.5 8.5 13.5 14M16 1Q20 8.5 16 16" fill="none" stroke="#fff" stroke-width="1.1"/></svg>
<svg class="a" style="left:1783px;top:1051px" width="18" height="19"><path d="M1 1H17V14H11L9 17L7 14H1Z" fill="#fff"/><path d="M4 5H14M4 8H14M4 11H10" stroke="#111" stroke-width="1.1"/></svg>
<div class="t" style="left:1811px;top:1053px;font-size:12.5px;color:#fff">TUR</div>
<div class="t" style="left:1864px;top:1045px;font-size:12px;color:#fff">16:59</div>
<div class="t" style="left:1850px;top:1062px;font-size:12px;color:#fff">13.11.2015</div>
<div class="a" style="left:1915px;top:1040px;width:1px;height:40px;background:#5a5758"></div>
<svg class="a" style="left:700px;top:430px;mix-blend-mode:multiply" width="545" height="350" viewBox="700 430 545 350"><defs><filter id="glow" x="-20%" y="-20%" width="140%" height="140%"><feGaussianBlur stdDeviation="5"/></filter></defs><rect x="726" y="450" width="499" height="308" rx="11" fill="#d8797a" opacity="0.92" filter="url(#glow)"/></svg>
<svg class="a" style="left:700px;top:430px" width="545" height="350" viewBox="700 430 545 350">
<defs>

<linearGradient id="sideB" x1="785" y1="0" x2="984" y2="0" gradientUnits="userSpaceOnUse"><stop offset="0" stop-color="#a64a47"/><stop offset="0.5" stop-color="#8a3c3a"/><stop offset="1" stop-color="#5e2626"/></linearGradient>
<linearGradient id="sideA" x1="984" y1="0" x2="1092" y2="0" gradientUnits="userSpaceOnUse"><stop offset="0" stop-color="#1e3350"/><stop offset="1" stop-color="#243c5c"/></linearGradient>
</defs>

<!-- frame bevel -->
<path d="M735 459H1216V748H735Z" fill="#b58485"/>
<path d="M735 459H1216L1207 466H741Z" fill="#e9a5a6"/>
<path d="M735 459L741 466V739L735 748Z" fill="#c48a8a"/>
<path d="M1216 459V748L1207 739V466Z" fill="#835d59"/>
<path d="M735 748H1216L1207 739H741Z" fill="#7a5656"/>
<path d="M735 459.5H1216" stroke="#a77878" stroke-width="1" fill="none"/>
<rect x="741" y="466" width="466" height="273" fill="#e8a2a0"/>
<!-- sides -->
<path d="M781.5 605A155.5 73 0 0 0 984 674.6L984 709.5A152 72 0 0 1 785 641Z" fill="url(#sideB)"/>
<path d="M984 674.6A155.5 73 0 0 0 1092.5 605L1089 641A152 72 0 0 1 984 709.5Z" fill="url(#sideA)"/>
<!-- top -->
<path d="M937 590L937 532A155.5 73 0 0 1 984 674.6Z" fill="#4f81bd"/>
<path d="M937 590L984 674.6A155.5 73 0 0 1 847 545.5Z" fill="#c0504d"/>
<path d="M937 590L847 545.5A155.5 73 0 0 1 879 537.3Z" fill="#9bbb59"/>
<path d="M937 590L879 537.3A155.5 73 0 0 1 937 532Z" fill="#8064a2"/>
<!-- leaders -->
<g fill="none" stroke="#111" stroke-width="1">
<path d="M818 502.5H825.5L862.5 541"/>
<path d="M897 509.5H904L908 533"/>
<path d="M1086.5 583.5L1102 567.5H1107"/>
<path d="M793.5 662V677"/>
</g>
<g font-family="Liberation Sans, sans-serif" font-size="11.5" fill="#111">
<text x="794" y="502" text-anchor="middle">C Partisi</text>
<text x="794" y="518" text-anchor="middle">4%</text>
<text x="871.5" y="509.5" text-anchor="middle">D Partisi</text>
<text x="871.5" y="525.5" text-anchor="middle">8%</text>
<text x="1119.5" y="551" text-anchor="middle">A Partisi</text>
<text x="1119.5" y="567" text-anchor="middle">46%</text>
<text x="775.5" y="689" text-anchor="middle">B Partisi</text>
<text x="775.5" y="705" text-anchor="middle">42%</text>
<text x="1157" y="591.5">A Partisi</text>
<text x="1157" y="615.5">B Partisi</text>
<text x="1157" y="639.5">C Partisi</text>
<text x="1157" y="663.5">D Partisi</text>
</g>
<rect x="1146" y="584.5" width="7" height="7" fill="#4f81bd"/>
<rect x="1146" y="608.5" width="7" height="7" fill="#c0504d"/>
<rect x="1146" y="632.5" width="7" height="7" fill="#9bbb59"/>
<rect x="1146" y="656.5" width="7" height="7" fill="#8064a2"/>
<text x="974.5" y="492" text-anchor="middle" font-family="Liberation Sans, sans-serif" font-weight="bold" font-size="20.3" fill="#000" stroke="#000" stroke-width="0.35">2012 Seçim Sonuçları</text>
</svg>
<svg class="a" style="left:0;top:0" width="1920" height="140" font-family="Liberation Sans, sans-serif"><defs>
<linearGradient id="bg" x1="0" y1="0" x2="0" y2="1"><stop offset="0" stop-color="#e8f0fa"/><stop offset="0.45" stop-color="#dae6f5"/><stop offset="0.5" stop-color="#cfdef1"/><stop offset="1" stop-color="#d8e5f6"/></linearGradient>
<linearGradient id="cb" x1="0" y1="0" x2="0" y2="1"><stop offset="0" stop-color="#f4f8fd"/><stop offset="1" stop-color="#e9f0f9"/></linearGradient>
<linearGradient id="hlg" x1="0" y1="0" x2="0" y2="1"><stop offset="0" stop-color="#fde3ad"/><stop offset="0.3" stop-color="#f9b65a"/><stop offset="0.45" stop-color="#f8ad45"/><stop offset="1" stop-color="#fff0a8"/></linearGradient>
<radialGradient id="ob" cx="0.5" cy="0.45" r="0.6"><stop offset="0" stop-color="#f7f5f0"/><stop offset="0.55" stop-color="#e2ddd2"/><stop offset="0.85" stop-color="#cfc8b8"/><stop offset="1" stop-color="#f4efe2"/></radialGradient>
</defs>
<circle cx="21.5" cy="22" r="18.2" fill="url(#ob)" stroke="#8e8b84" stroke-width="1.2"/>
<circle cx="21.5" cy="22" r="16.9" fill="none" stroke="#fff" stroke-opacity="0.7" stroke-width="0.8"/>
<defs><linearGradient id="rg" x1="0" y1="0" x2="1" y2="1"><stop offset="0" stop-color="#c0201a"/><stop offset="1" stop-color="#f29a20"/></linearGradient><linearGradient id="yg" x1="0" y1="0" x2="1" y2="1"><stop offset="0" stop-color="#f8d24a"/><stop offset="1" stop-color="#f0a817"/></linearGradient><linearGradient id="gg" x1="0" y1="0" x2="1" y2="1"><stop offset="0" stop-color="#8fcf4f"/><stop offset="1" stop-color="#3f8a22"/></linearGradient></defs>
<path d="M19.2 22.2H13.6Q11.4 22.2 11.4 20V14.3Q11.4 12.1 13.6 12.1H19.3Q21.5 12.1 21.5 14.3V19.2" fill="none" stroke="url(#rg)" stroke-width="2.5" stroke-linecap="round"/>
<path d="M23.8 16.6H27.9Q29.7 16.6 29.7 18.4V21.4M25.5 20.2L27.5 18.5" fill="none" stroke="#2f7bc8" stroke-width="1.9" stroke-linecap="round"/>
<path d="M13 30.8V26.6Q13 24.9 14.7 24.9H16.2M21.6 27.6V31.3Q21.6 33 19.9 33H14.7Q13 33 13 31.3" fill="none" stroke="url(#yg)" stroke-width="2.5" stroke-linecap="round"/>
<path d="M26.6 24.9H29.8Q31.6 24.9 31.6 26.7V30.6Q31.6 32.4 29.8 32.4H25.2Q23.5 32.4 23.5 30.7V28.2" fill="none" stroke="url(#gg)" stroke-width="2.5" stroke-linecap="round"/>
<circle cx="20.5" cy="21.4" r="1" fill="#e2641c"/><circle cx="24" cy="21.4" r="1" fill="#2f7bc8"/><circle cx="20.5" cy="25.6" r="0.9" fill="#f2c33a"/><circle cx="24.5" cy="25.3" r="0.9" fill="#62ad36"/>
<path d="M37 2.5H131A10.5 10.5 0 0 1 131 23.5H46Q45 9 37 2.5Z" fill="#f3f5f9" stroke="#8e939b"/>
<rect x="52.5" y="6.5" width="13" height="13" rx="1" fill="#4a57a8" stroke="#2a3580"/><rect x="55" y="7" width="8" height="5" fill="#f4f6fb"/><rect x="56" y="14" width="6" height="5" fill="#1c2460"/><rect x="57" y="15" width="2" height="3" fill="#cfd6ee"/>
<path d="M78 8.5L74.5 12.5L79 14.5" fill="none" stroke="#2d5ec2" stroke-width="2"/><path d="M75.5 12.5Q84 9 86 13Q87 17 82 19" fill="none" stroke="#2d5ec2" stroke-width="2.2"/>
<path d="M93.0 11.25H98.0L95.5 13.75Z" fill="#4a5f85"/>
<path d="M114 8.5L117.5 12.5L113 14.5" fill="none" stroke="#a9b2c0" stroke-width="2"/><path d="M116.5 12.5Q108 9 106 13Q105 17 110 19" fill="none" stroke="#a9b2c0" stroke-width="2.2"/>
<path d="M125.0 11.25H130.0L127.5 13.75Z" fill="#a8b0bc"/>
<path d="M149.5 9.5H154.5" stroke="#233f7a" stroke-width="1"/><path d="M149.5 11H154.5L152 14Z" fill="#233f7a"/>
<text x="961.5" y="18" font-size="12" fill="#2b2b2b" text-anchor="middle" font-weight="normal" font-style="normal">kemal - Microsoft Excel</text>
<rect x="16.5" y="59.5" width="21" height="24" rx="1.5" fill="#dde3ea" stroke="#b5bec9"/>
<rect x="21.5" y="57.5" width="11" height="4" rx="1" fill="#eef1f5" stroke="#aab4c0"/>
<path d="M24.5 68.5H36.5L40.5 72.5V86.5H24.5Z" fill="#f7f9fb" stroke="#b7c0cb"/>
<path d="M27 74.5H37M27 77.5H37M27 80.5H37M27 83.5H35" stroke="#d5dbe3"/>
<text x="9.5" y="102.5" font-size="11" fill="#15428b" text-anchor="start" font-weight="normal" font-style="normal">Yapıştır</text>
<path d="M25.0 110.25H30.0L27.5 112.75Z" fill="#3e5a8a"/>
<path d="M57 58L60.2 66.5M63.5 58L60.8 66.5" stroke="#5a6270" stroke-width="1.4"/><ellipse cx="57.6" cy="69.2" rx="2.5" ry="2.9" fill="#2f55b0"/><ellipse cx="62.8" cy="69.2" rx="2.5" ry="2.9" fill="#2f55b0"/><circle cx="57.4" cy="69.6" r="0.9" fill="#dfe8f6"/><circle cx="63" cy="69.6" r="0.9" fill="#dfe8f6"/>
<text x="71.3" y="69" font-size="11" fill="#15428b" text-anchor="start" font-weight="normal" font-style="normal" textLength="16.5" lengthAdjust="spacingAndGlyphs">Kes</text>
<path d="M52.5 80.5H58.5L60.5 82.5V89.5H52.5Z" fill="#fff" stroke="#3d4a60"/><path d="M54 83.5H57M54 85.5H58M54 87.5H58" stroke="#5a7ec0" stroke-width="0.8"/>
<path d="M58.5 84.5H64L66.5 87V93.5H58.5Z" fill="#fff" stroke="#2d4e94" stroke-width="1.1"/><path d="M60 87.5H63M60 89.5H65M60 91.5H65" stroke="#4a70c0" stroke-width="0.9"/>
<text x="71.5" y="91" font-size="11" fill="#15428b" text-anchor="start" font-weight="normal" font-style="normal">Kopyala</text>
<path d="M62 107L67 101.5" stroke="#4e3f8a" stroke-width="3.4" stroke-linecap="round"/><path d="M62 107L67 101.5" stroke="#8a78c8" stroke-width="1.6" stroke-linecap="round"/>
<path d="M58.5 104.5L64 110L62 112L56.5 106.5Z" fill="#c9ccd2" stroke="#6d7078" stroke-width="0.7"/>
<path d="M56.5 106.5L62 112Q58 117 56 116Q55 113 52.5 111.5Q52 109.5 56.5 106.5Z" fill="#e8db7a" stroke="#8f7f2c" stroke-width="0.7"/>
<text x="71.3" y="112.5" font-size="11" fill="#15428b" text-anchor="start" font-weight="normal" font-style="normal" textLength="70.4" lengthAdjust="spacingAndGlyphs">Biçim Boyacısı</text>
<rect x="157.5" y="62.5" width="96" height="21" rx="1" fill="url(#cb)" stroke="#b8cae0"/>
<text x="160.5" y="77" font-size="11" fill="#111" text-anchor="start" font-weight="normal" font-style="normal">Calibri</text>
<path d="M244.0 71.75H249.0L246.5 74.25Z" fill="#3e5a8a"/>
<rect x="254.5" y="62.5" width="42" height="21" rx="1" fill="url(#cb)" stroke="#b8cae0"/>
<text x="257.5" y="77" font-size="11" fill="#111" text-anchor="start" font-weight="normal" font-style="normal">11</text>
<path d="M286.5 71.75H291.5L289 74.25Z" fill="#3e5a8a"/>
<rect x="300.5" y="62.5" width="44" height="21" rx="2.5" fill="url(#bg)" stroke="#b3c5dc"/>
<path d="M322.5 63V83" stroke="#c3d2e5"/>
<text x="305" y="80" font-family="Liberation Serif" font-weight="bold" font-size="14" fill="#222">A</text>
<path d="M316 69.5H321L318.5 66.5Z" fill="#3e5a8a"/>
<text x="327.5" y="80" font-family="Liberation Serif" font-weight="bold" font-size="10" fill="#222">A</text>
<path d="M336 66.5H341L338.5 69.5Z" fill="#3e5a8a"/>
<rect x="157.5" y="91.5" width="79" height="21" rx="2.5" fill="url(#bg)" stroke="#b3c5dc"/>
<path d="M179.5 92V112" stroke="#c3d2e5"/>
<path d="M203.5 92V112" stroke="#c3d2e5"/>
<text x="162.5" y="106.5" font-family="Liberation Serif" font-weight="bold" font-size="13" fill="#111">K</text>
<text x="185" y="106.5" font-family="Liberation Serif" font-weight="bold" font-style="italic" font-size="13" fill="#111">T</text>
<text x="209.5" y="105" font-family="Liberation Serif" font-weight="bold" font-size="12" fill="#333">A</text><path d="M209.5 107.5H219.5" stroke="#222"/>
<path d="M227.5 101.25H232.5L230 103.75Z" fill="#3e5a8a"/>
<rect x="240.5" y="91.5" width="34" height="21" rx="2.5" fill="url(#bg)" stroke="#b3c5dc"/>
<g fill="#5a6475"><rect x="252" y="98" width="1" height="1"/><rect x="252" y="104" width="1" height="1"/><rect x="258" y="96" width="1" height="1"/><rect x="258" y="102" width="1" height="1"/><rect x="246" y="100" width="1" height="1"/><rect x="248" y="106" width="1" height="1"/><rect x="246" y="106" width="1" height="1"/><rect x="252" y="100" width="1" height="1"/><rect x="252" y="106" width="1" height="1"/><rect x="258" y="98" width="1" height="1"/><rect x="258" y="104" width="1" height="1"/><rect x="250" y="106" width="1" height="1"/><rect x="254" y="106" width="1" height="1"/><rect x="246" y="96" width="1" height="1"/><rect x="246" y="102" width="1" height="1"/><rect x="246" y="104" width="1" height="1"/><rect x="256" y="106" width="1" height="1"/><rect x="248" y="96" width="1" height="1"/><rect x="248" y="102" width="1" height="1"/><rect x="252" y="96" width="1" height="1"/><rect x="252" y="102" width="1" height="1"/><rect x="258" y="100" width="1" height="1"/><rect x="250" y="96" width="1" height="1"/><rect x="250" y="102" width="1" height="1"/><rect x="258" y="106" width="1" height="1"/><rect x="254" y="96" width="1" height="1"/><rect x="254" y="102" width="1" height="1"/><rect x="246" y="98" width="1" height="1"/><rect x="256" y="96" width="1" height="1"/><rect x="256" y="102" width="1" height="1"/></g>
<path d="M246 108.5H259" stroke="#111" stroke-width="1.2"/>
<path d="M266.0 101.25H271.0L268.5 103.75Z" fill="#3e5a8a"/>
<rect x="278.5" y="91.5" width="66" height="21" rx="2.5" fill="url(#bg)" stroke="#b3c5dc"/>
<path d="M311.5 92V112" stroke="#c3d2e5"/>
<path d="M284 101L289.5 95.5L295 101L289.5 106.5Z" fill="#fff" stroke="#1e2a40" stroke-width="0.9"/><path d="M286 101L289.5 97.5L293 101L289.5 104.5Z" fill="#e6ecf5"/><path d="M289.5 94.5V100" stroke="#3b4a63" stroke-width="1"/><circle cx="289.5" cy="94.5" r="1.3" fill="none" stroke="#3b4a63" stroke-width="0.8"/><path d="M295 100Q298.5 100 298 105L296.5 104Q296.5 102 295 101.5Z" fill="#3a6cc0"/>
<rect x="282" y="106.5" width="16" height="3.5" fill="#f79646"/>
<path d="M302.5 101.25H307.5L305 103.75Z" fill="#3e5a8a"/>
<text x="317.5" y="105" font-family="Liberation Serif" font-weight="bold" font-size="14" fill="#2c4a94">A</text>
<rect x="315" y="106.5" width="16" height="3.5" fill="#e40000"/>
<path d="M336.0 101.25H341.0L338.5 103.75Z" fill="#3e5a8a"/>
<rect x="356.5" y="62.5" width="68" height="21" rx="2.5" fill="url(#bg)" stroke="#b3c5dc"/>
<rect x="402.5" y="63" width="21.5" height="20" fill="url(#hlg)"/>
<path d="M378.5 63V83" stroke="#c3d2e5"/>
<path d="M402.5 63V83" stroke="#c3d2e5"/>
<path d="M361.5 66.5H375.0" stroke="#111" stroke-width="1.2" stroke-linecap="round"/>
<path d="M362.5 68.5H374.0" stroke="#111" stroke-width="1.2" stroke-linecap="round"/>
<path d="M361.5 70.5H375.0" stroke="#111" stroke-width="1.2" stroke-linecap="round"/>
<path d="M362.5 72.5H374.0" stroke="#111" stroke-width="1.2" stroke-linecap="round"/>
<path d="M384.5 70.5H398.0" stroke="#111" stroke-width="1.2" stroke-linecap="round"/>
<path d="M385.5 72.5H397.0" stroke="#111" stroke-width="1.2" stroke-linecap="round"/>
<path d="M384.5 74.5H398.0" stroke="#111" stroke-width="1.2" stroke-linecap="round"/>
<path d="M385.5 76.5H397.0" stroke="#111" stroke-width="1.2" stroke-linecap="round"/>
<path d="M407.5 73.5H421.0" stroke="#111" stroke-width="1.2" stroke-linecap="round"/>
<path d="M408.5 75.5H420.0" stroke="#111" stroke-width="1.2" stroke-linecap="round"/>
<path d="M407.5 77.5H421.0" stroke="#111" stroke-width="1.2" stroke-linecap="round"/>
<path d="M408.5 79.5H420.0" stroke="#111" stroke-width="1.2" stroke-linecap="round"/>
<rect x="428.5" y="62.5" width="31" height="21" rx="2.5" fill="url(#bg)" stroke="#b3c5dc"/>
<text x="0" y="0" font-size="10" font-weight="bold" fill="#111" transform="translate(435.5 80) rotate(-42)">ab</text><path d="M439 80.5L447 73" stroke="#333" stroke-width="0.9"/><path d="M444.5 72.5H448V76" fill="none" stroke="#333" stroke-width="0.9"/>
<path d="M450.0 71.25H455.0L452.5 73.75Z" fill="#3e5a8a"/>
<rect x="356.5" y="91.5" width="68" height="21" rx="2.5" fill="url(#bg)" stroke="#b3c5dc"/>
<path d="M378.5 92V112" stroke="#c3d2e5"/>
<path d="M402.5 92V112" stroke="#c3d2e5"/>
<path d="M361.5 96.5H375.0" stroke="#111" stroke-width="1.2" stroke-linecap="round"/>
<path d="M361.5 98.5H371.5" stroke="#111" stroke-width="1.2" stroke-linecap="round"/>
<path d="M361.5 100.5H375.0" stroke="#111" stroke-width="1.2" stroke-linecap="round"/>
<path d="M361.5 102.5H371.5" stroke="#111" stroke-width="1.2" stroke-linecap="round"/>
<path d="M361.5 104.5H375.0" stroke="#111" stroke-width="1.2" stroke-linecap="round"/>
<path d="M361.5 106.5H371.5" stroke="#111" stroke-width="1.2" stroke-linecap="round"/>
<path d="M384.5 96.5H398.0" stroke="#111" stroke-width="1.2" stroke-linecap="round"/>
<path d="M386.25 98.5H396.25" stroke="#111" stroke-width="1.2" stroke-linecap="round"/>
<path d="M384.5 100.5H398.0" stroke="#111" stroke-width="1.2" stroke-linecap="round"/>
<path d="M386.25 102.5H396.25" stroke="#111" stroke-width="1.2" stroke-linecap="round"/>
<path d="M384.5 104.5H398.0" stroke="#111" stroke-width="1.2" stroke-linecap="round"/>
<path d="M386.25 106.5H396.25" stroke="#111" stroke-width="1.2" stroke-linecap="round"/>
<path d="M407.5 96.5H421.0" stroke="#111" stroke-width="1.2" stroke-linecap="round"/>
<path d="M411.0 98.5H421.0" stroke="#111" stroke-width="1.2" stroke-linecap="round"/>
<path d="M407.5 100.5H421.0" stroke="#111" stroke-width="1.2" stroke-linecap="round"/>
<path d="M411.0 102.5H421.0" stroke="#111" stroke-width="1.2" stroke-linecap="round"/>
<path d="M407.5 104.5H421.0" stroke="#111" stroke-width="1.2" stroke-linecap="round"/>
<path d="M411.0 106.5H421.0" stroke="#111" stroke-width="1.2" stroke-linecap="round"/>
<rect x="428.5" y="91.5" width="44" height="21" rx="2.5" fill="url(#bg)" stroke="#b3c5dc"/>
<path d="M450.5 92V112" stroke="#c3d2e5"/>
<g transform="translate(0 0)"><path d="M434 96.5H437M440 96.5H448M434 104.5H437M440 104.5H448M434 106.5H437M440 106.5H441" stroke="#111" stroke-width="1"/><path d="M440 99H448M440 101.5H445" stroke="#111" stroke-width="1.8"/><path d="M439.5 94V109" stroke="#111" stroke-width="1" stroke-dasharray="1 1.2"/></g>
<path d="M432 100.5H437M434.5 98L432 100.5L434.5 103" fill="none" stroke="#4a78c8" stroke-width="1.6"/>
<g transform="translate(22 0)"><path d="M434 96.5H437M440 96.5H448M434 104.5H437M440 104.5H448M434 106.5H437M440 106.5H441" stroke="#111" stroke-width="1"/><path d="M440 99H448M440 101.5H445" stroke="#111" stroke-width="1.8"/><path d="M439.5 94V109" stroke="#111" stroke-width="1" stroke-dasharray="1 1.2"/></g>
<path d="M453 100.5H458M456 98L458.5 100.5L456 103" fill="none" stroke="#4a78c8" stroke-width="1.6"/>
<path d="M477.5 59V115" stroke="#b9cbe0"/><path d="M478.5 59V115" stroke="#f4f8fd"/>
<rect x="484.5" y="65.5" width="11" height="4" rx="1" fill="#fff" stroke="#5d6b80"/><path d="M486 67.5H499.5" stroke="#d08a3a" stroke-width="1"/><rect x="484.5" y="72.5" width="11" height="7" rx="1" fill="#fff" stroke="#5d6b80"/><path d="M486.5 74.5H493.5M486.5 77H493.5" stroke="#d08a3a" stroke-width="1"/><path d="M499.5 70.5L497 74M497 71.5V74.5H500" fill="none" stroke="#4a70b8" stroke-width="0.9"/>
<text x="503.5" y="77" font-size="11" fill="#15428b" text-anchor="start" font-weight="normal" font-style="normal" textLength="63.3" lengthAdjust="spacingAndGlyphs">Metni Kaydır</text>
<rect x="484.5" y="94.5" width="15" height="14" fill="#eef3fa" stroke="#5d6b80"/><path d="M484.5 97.5H499.5M484.5 105.5H499.5M491.5 94.5V97.5M491.5 105.5V108.5" stroke="#7f8da3"/><rect x="485" y="98" width="14" height="7" fill="#fff"/><text x="489" y="104.5" font-family="Liberation Serif" font-size="9" font-weight="bold" fill="#111">a</text><path d="M485.5 101.5H488M496 101.5H498.5" stroke="#111"/><path d="M486.5 100L485.5 101.5L486.5 103M497.5 100L498.5 101.5L497.5 103" fill="none" stroke="#111" stroke-width="0.8"/>
<text x="503.5" y="106" font-size="11" fill="#15428b" text-anchor="start" font-weight="normal" font-style="normal" textLength="87" lengthAdjust="spacingAndGlyphs">Birleştir ve Ortala</text>
<path d="M596.0 100.25H601.0L598.5 102.75Z" fill="#3e5a8a"/>
<rect x="616.5" y="62.5" width="127" height="21" rx="1" fill="url(#cb)" stroke="#b8cae0"/>
<text x="619.5" y="77" font-size="11" fill="#111" text-anchor="start" font-weight="normal" font-style="normal">Genel</text>
<path d="M734.5 71.75H739.5L737 74.25Z" fill="#3e5a8a"/>
<rect x="616.5" y="91.5" width="79" height="21" rx="2.5" fill="url(#bg)" stroke="#b3c5dc"/>
<path d="M650.5 92V112" stroke="#c3d2e5"/>
<path d="M674.5 92V112" stroke="#c3d2e5"/>
<rect x="620" y="94" width="16" height="9" fill="#2f58a8"/><ellipse cx="628" cy="98.5" rx="6" ry="3.3" fill="#9bb8e8" stroke="#e6eefb" stroke-width="0.8"/><text x="625.5" y="101.5" font-size="6" font-weight="bold" fill="#1d3f86">$</text>
<ellipse cx="631.5" cy="101" rx="3.2" ry="1.2" fill="#f3c64a" stroke="#a47a12" stroke-width="0.6"/>
<ellipse cx="631.5" cy="103" rx="3.2" ry="1.2" fill="#f3c64a" stroke="#a47a12" stroke-width="0.6"/>
<ellipse cx="631.5" cy="105" rx="3.2" ry="1.2" fill="#f3c64a" stroke="#a47a12" stroke-width="0.6"/>
<ellipse cx="631.5" cy="107" rx="3.2" ry="1.2" fill="#f3c64a" stroke="#a47a12" stroke-width="0.6"/>
<ellipse cx="631.5" cy="109" rx="3.2" ry="1.2" fill="#f3c64a" stroke="#a47a12" stroke-width="0.6"/>
<ellipse cx="624" cy="106.5" rx="2.6" ry="1.1" fill="#f3c64a" stroke="#a47a12" stroke-width="0.6"/><path d="M626.5 107Q628 109.5 630 109" fill="none" stroke="#a47a12" stroke-width="0.6"/>
<path d="M641.0 100.25H646.0L643.5 102.75Z" fill="#3e5a8a"/>
<circle cx="657.5" cy="99" r="1.7" fill="none" stroke="#222" stroke-width="1.2"/><circle cx="665.5" cy="105" r="1.7" fill="none" stroke="#222" stroke-width="1.2"/><path d="M666 97L659 107" stroke="#222" stroke-width="1.3"/>
<path d="M684.5 101.5A1.6 1.6 0 1 1 686.2 103Q686 105.5 683.5 106.5" fill="#222" stroke="#222" stroke-width="0.8"/>
<rect x="699.5" y="91.5" width="44" height="21" rx="2.5" fill="url(#bg)" stroke="#b3c5dc"/>
<path d="M722.5 92V112" stroke="#c3d2e5"/>
<text x="713" y="102" font-size="9" font-weight="bold" fill="#222">0</text><text x="704.5" y="110" font-size="9" font-weight="bold" fill="#222">,00</text><text x="709.5" y="102" font-size="9" font-weight="bold" fill="#222">,</text><path d="M703.5 98H709M705.5 96L703 98L705.5 100" fill="none" stroke="#3a6cc8" stroke-width="1.4"/>
<text x="726.5" y="101" font-size="9" font-weight="bold" fill="#222">,00</text><text x="731.5" y="110" font-size="9" font-weight="bold" fill="#222">,0</text><path d="M725.5 106H731M729 104L731.5 106L729 108" fill="none" stroke="#3a6cc8" stroke-width="1.4"/>
<rect x="781.5" y="60.5" width="7" height="6" fill="#fff" stroke="#9aa6b8" stroke-width="0.8"/>
<rect x="789.0" y="60.5" width="7" height="6" fill="#fff" stroke="#9aa6b8" stroke-width="0.8"/>
<rect x="796.5" y="60.5" width="7" height="6" fill="#fff" stroke="#9aa6b8" stroke-width="0.8"/>
<rect x="804.0" y="60.5" width="7" height="6" fill="#fff" stroke="#9aa6b8" stroke-width="0.8"/>
<rect x="781.5" y="67.0" width="7" height="6" fill="#fff" stroke="#9aa6b8" stroke-width="0.8"/>
<rect x="789.0" y="67.0" width="7" height="6" fill="#fff" stroke="#9aa6b8" stroke-width="0.8"/>
<rect x="796.5" y="67.0" width="7" height="6" fill="#fff" stroke="#9aa6b8" stroke-width="0.8"/>
<rect x="804.0" y="67.0" width="7" height="6" fill="#fff" stroke="#9aa6b8" stroke-width="0.8"/>
<rect x="781.5" y="73.5" width="7" height="6" fill="#fff" stroke="#9aa6b8" stroke-width="0.8"/>
<rect x="789.0" y="73.5" width="7" height="6" fill="#fff" stroke="#9aa6b8" stroke-width="0.8"/>
<rect x="796.5" y="73.5" width="7" height="6" fill="#fff" stroke="#9aa6b8" stroke-width="0.8"/>
<rect x="804.0" y="73.5" width="7" height="6" fill="#fff" stroke="#9aa6b8" stroke-width="0.8"/>
<rect x="781.5" y="80.0" width="7" height="6" fill="#fff" stroke="#9aa6b8" stroke-width="0.8"/>
<rect x="789.0" y="80.0" width="7" height="6" fill="#fff" stroke="#9aa6b8" stroke-width="0.8"/>
<rect x="796.5" y="80.0" width="7" height="6" fill="#fff" stroke="#9aa6b8" stroke-width="0.8"/>
<rect x="804.0" y="80.0" width="7" height="6" fill="#fff" stroke="#9aa6b8" stroke-width="0.8"/>
<rect x="788.5" y="60.5" width="7" height="6" fill="#e84c3d"/><rect x="788.5" y="67" width="14" height="6" fill="#5a8ad8"/><rect x="788.5" y="73.5" width="10" height="6" fill="#e84c3d"/><rect x="788.5" y="80" width="7" height="6" fill="#5a8ad8"/>
<rect x="795.5" y="74.5" width="13" height="12" fill="#fbfcfe" stroke="#6c7a8e"/><path d="M801 76.5L797.5 78.5L801 80.5M797.5 81.5H801M797.5 83.5H801M797.5 85H801M803 77H807.5M803 79H807.5M806.5 75.5L804 80.5M803 82L807 83.5L803 85" fill="none" stroke="#111" stroke-width="0.9"/>
<text x="797.3" y="102.5" font-size="11" fill="#15428b" text-anchor="middle" font-weight="normal" font-style="normal" textLength="37.4" lengthAdjust="spacingAndGlyphs">Koşullu</text>
<text x="757.5" y="115" font-size="11" fill="#15428b" text-anchor="start" font-weight="normal" font-style="normal" textLength="71" lengthAdjust="spacingAndGlyphs">Biçimlendirme</text>
<path d="M832.0 110.75H837.0L834.5 113.25Z" fill="#3e5a8a"/>
<rect x="859.5" y="60.5" width="7" height="6" fill="#fff" stroke="#9aa6b8" stroke-width="0.8"/>
<rect x="867.0" y="60.5" width="7" height="6" fill="#fff" stroke="#9aa6b8" stroke-width="0.8"/>
<rect x="874.5" y="60.5" width="7" height="6" fill="#fff" stroke="#9aa6b8" stroke-width="0.8"/>
<rect x="882.0" y="60.5" width="7" height="6" fill="#fff" stroke="#9aa6b8" stroke-width="0.8"/>
<rect x="859.5" y="67.0" width="7" height="6" fill="#fff" stroke="#9aa6b8" stroke-width="0.8"/>
<rect x="867.0" y="67.0" width="7" height="6" fill="#a8c4ee" stroke="#9aa6b8" stroke-width="0.8"/>
<rect x="874.5" y="67.0" width="7" height="6" fill="#a8c4ee" stroke="#9aa6b8" stroke-width="0.8"/>
<rect x="882.0" y="67.0" width="7" height="6" fill="#a8c4ee" stroke="#9aa6b8" stroke-width="0.8"/>
<rect x="859.5" y="73.5" width="7" height="6" fill="#fff" stroke="#9aa6b8" stroke-width="0.8"/>
<rect x="867.0" y="73.5" width="7" height="6" fill="#a8c4ee" stroke="#9aa6b8" stroke-width="0.8"/>
<rect x="874.5" y="73.5" width="7" height="6" fill="#a8c4ee" stroke="#9aa6b8" stroke-width="0.8"/>
<rect x="882.0" y="73.5" width="7" height="6" fill="#a8c4ee" stroke="#9aa6b8" stroke-width="0.8"/>
<rect x="859.5" y="80.0" width="7" height="6" fill="#fff" stroke="#9aa6b8" stroke-width="0.8"/>
<rect x="867.0" y="80.0" width="7" height="6" fill="#a8c4ee" stroke="#9aa6b8" stroke-width="0.8"/>
<rect x="874.5" y="80.0" width="7" height="6" fill="#a8c4ee" stroke="#9aa6b8" stroke-width="0.8"/>
<rect x="882.0" y="80.0" width="7" height="6" fill="#a8c4ee" stroke="#9aa6b8" stroke-width="0.8"/>
<path d="M880 78L889 68" stroke="#6d7480" stroke-width="3.2" stroke-linecap="round"/><path d="M880 78L889 68" stroke="#eef0f3" stroke-width="2" stroke-linecap="round"/><path d="M877 80L881 77L883 79L879.5 83Z" fill="#a88448"/><path d="M877 80L879.5 83Q876 87 870 87.5Q873 84 877 80Z" fill="#4f7ac4"/>
<text x="874.5" y="102.5" font-size="11" fill="#15428b" text-anchor="middle" font-weight="normal" font-style="normal" textLength="65" lengthAdjust="spacingAndGlyphs">Tablo Olarak</text>
<text x="842" y="115" font-size="11" fill="#15428b" text-anchor="start" font-weight="normal" font-style="normal" textLength="56" lengthAdjust="spacingAndGlyphs">Biçimlendir</text>
<path d="M901.0 110.75H906.0L903.5 113.25Z" fill="#3e5a8a"/>
<rect x="911.5" y="57.5" width="532" height="58" rx="1" fill="#e0eaf7" stroke="#c3d4e9"/>
<rect x="913" y="59" width="105" height="27.5" rx="2" fill="#fff" stroke="#e3b456" stroke-width="2"/><rect x="914.5" y="60.5" width="102" height="24.5" fill="none" stroke="#fbe4a8" stroke-width="1"/>
<text x="919.5" y="77" font-size="14" fill="#000" text-anchor="start" font-weight="normal" font-style="normal" textLength="45" lengthAdjust="spacingAndGlyphs">Normal</text>
<rect x="1022.5" y="60.5" width="98" height="25" fill="#c6efce" stroke="#c6efce"/>
<text x="1025.5" y="77" font-size="14" fill="#006100" text-anchor="start" font-weight="normal" font-style="normal" textLength="14" lengthAdjust="spacingAndGlyphs">İyi</text>
<rect x="1127.5" y="60.5" width="99" height="25" fill="#ffc7ce" stroke="#ffc7ce"/>
<text x="1131" y="77" font-size="14" fill="#9c0006" text-anchor="start" font-weight="normal" font-style="normal" textLength="29" lengthAdjust="spacingAndGlyphs">Kötü</text>
<rect x="1233.5" y="60.5" width="99" height="25" fill="#ffeb9c" stroke="#ffeb9c"/>
<text x="1237" y="77" font-size="14" fill="#9c6500" text-anchor="start" font-weight="normal" font-style="normal" textLength="27" lengthAdjust="spacingAndGlyphs">Nötr</text>
<rect x="1339.5" y="60.5" width="99" height="25" fill="#fff" stroke="#fff"/>
<text x="1343" y="77" font-size="14" fill="#7f7f7f" text-anchor="start" font-weight="normal" font-style="italic" textLength="91" lengthAdjust="spacingAndGlyphs">Açıklama Me...</text>
<rect x="913" y="90" width="104" height="22" fill="#fff"/>
<path d="M913 109.5H1017M913 111.5H1017" stroke="#fa7d00" stroke-width="1"/>
<text x="919" y="105" font-size="14" fill="#fa7d00" text-anchor="start" font-weight="normal" font-style="normal" textLength="67" lengthAdjust="spacingAndGlyphs">Bağlı Hücre</text>
<rect x="1021.5" y="89.5" width="99" height="22" fill="#f2f2f2" stroke="#3f3f3f"/>
<text x="1026" y="105" font-size="14" fill="#3f3f3f" text-anchor="start" font-weight="bold" font-style="normal" textLength="28" lengthAdjust="spacingAndGlyphs">Çıkış</text>
<rect x="1127.5" y="89.5" width="99" height="22" fill="#ffcc99" stroke="#7f7f7f"/>
<text x="1131" y="105" font-size="14" fill="#3f3f76" text-anchor="start" font-weight="normal" font-style="normal" textLength="26" lengthAdjust="spacingAndGlyphs">Giriş</text>
<rect x="1233.5" y="89.5" width="99" height="22" fill="#f2f2f2" stroke="#7f7f7f"/>
<text x="1237" y="105" font-size="14" fill="#fa7d00" text-anchor="start" font-weight="bold" font-style="normal" textLength="68" lengthAdjust="spacingAndGlyphs">Hesaplama</text>
<rect x="1339.5" y="89.5" width="99" height="22" fill="#a5a5a5" stroke="#3f3f3f" stroke-width="2"/><rect x="1342" y="92" width="94" height="17" fill="none" stroke="#fff" stroke-width="0.8"/>
<text x="1343" y="105" font-size="14" fill="#fff" text-anchor="start" font-weight="bold" font-style="normal" textLength="81" lengthAdjust="spacingAndGlyphs">İşaretli Hücre</text>
<defs><linearGradient id="sbd" x1="0" y1="0" x2="0" y2="1"><stop offset="0" stop-color="#f0f1f3"/><stop offset="0.5" stop-color="#e8eaee"/><stop offset="0.52" stop-color="#dde1e7"/><stop offset="1" stop-color="#e4e7ec"/></linearGradient><linearGradient id="sbn" x1="0" y1="0" x2="0" y2="1"><stop offset="0" stop-color="#e6eff9"/><stop offset="0.5" stop-color="#dbe6f4"/><stop offset="0.52" stop-color="#cbdbef"/><stop offset="1" stop-color="#d6e4f5"/></linearGradient></defs>
<rect x="1443.5" y="58.5" width="13" height="18.5" rx="1.5" fill="url(#sbd)" stroke="#c3d2e4"/>
<rect x="1443.5" y="78.5" width="13" height="18" rx="1" fill="url(#sbn)" stroke="#c3d2e4"/>
<rect x="1443.5" y="97.5" width="13" height="18" rx="1.5" fill="url(#sbn)" stroke="#c3d2e4"/>
<path d="M1447.5 69H1453.5L1450.5 66Z" fill="#a4aab3"/>
<path d="M1447.5 86H1453.5L1450.5 89Z" fill="#4a6a9a"/>
<path d="M1447 103.5H1454" stroke="#4a6a9a" stroke-width="1"/><path d="M1447.5 106H1453.5L1450.5 109Z" fill="#4a6a9a"/>
<rect x="1477.5" y="59.5" width="7" height="5" fill="#fff" stroke="#6a7585" stroke-width="0.9"/>
<rect x="1484.5" y="59.5" width="7" height="5" fill="#fff" stroke="#6a7585" stroke-width="0.9"/>
<rect x="1477.5" y="74.5" width="7" height="5" fill="#fff" stroke="#6a7585" stroke-width="0.9"/>
<rect x="1484.5" y="74.5" width="7" height="5" fill="#fff" stroke="#6a7585" stroke-width="0.9"/>
<rect x="1477.5" y="79.5" width="7" height="5" fill="#fff" stroke="#6a7585" stroke-width="0.9"/>
<rect x="1484.5" y="79.5" width="7" height="5" fill="#fff" stroke="#6a7585" stroke-width="0.9"/>
<rect x="1493.5" y="66.5" width="7" height="5" fill="#5a8ad8" stroke="#3a5aa0" stroke-width="0.9"/>
<rect x="1500.5" y="66.5" width="7" height="5" fill="#5a8ad8" stroke="#3a5aa0" stroke-width="0.9"/>
<path d="M1483 69H1491M1486 66.5L1483 69L1486 71.5" fill="none" stroke="#222" stroke-width="1.1"/>
<text x="1492.5" y="102.5" font-size="11" fill="#15428b" text-anchor="middle" font-weight="normal" font-style="normal">Ekle</text>
<path d="M1490.0 110.25H1495.0L1492.5 112.75Z" fill="#3e5a8a"/>
<rect x="1522.5" y="59.5" width="7" height="5" fill="#fff" stroke="#6a7585" stroke-width="0.9"/>
<rect x="1529.5" y="59.5" width="7" height="5" fill="#fff" stroke="#6a7585" stroke-width="0.9"/>
<rect x="1522.5" y="74.5" width="7" height="5" fill="#fff" stroke="#6a7585" stroke-width="0.9"/>
<rect x="1529.5" y="74.5" width="7" height="5" fill="#fff" stroke="#6a7585" stroke-width="0.9"/>
<rect x="1522.5" y="79.5" width="7" height="5" fill="#fff" stroke="#6a7585" stroke-width="0.9"/>
<rect x="1529.5" y="79.5" width="7" height="5" fill="#fff" stroke="#6a7585" stroke-width="0.9"/>
<rect x="1523.5" y="65.5" width="13" height="6" fill="none" stroke="#6a7585" stroke-dasharray="1 1"/><path d="M1537 64L1545 73M1545 64L1537 73" stroke="#e03c28" stroke-width="2"/>
<text x="1534" y="102.5" font-size="11" fill="#15428b" text-anchor="middle" font-weight="normal" font-style="normal">Sil</text>
<path d="M1532.0 110.25H1537.0L1534.5 112.75Z" fill="#3e5a8a"/>
<path d="M1561.5 59.5H1590.5" stroke="#333" stroke-dasharray="1.5 1"/><path d="M1567 59.5H1583M1569 57.5L1567 59.5L1569 61.5M1581 57.5L1583 59.5L1581 61.5" fill="none" stroke="#333"/>
<rect x="1561.5" y="62.5" width="29" height="21" rx="1" fill="#f7f9fc" stroke="#8d98a8"/><path d="M1561.5 68.5H1590.5M1561.5 80.5H1590.5M1569.5 62.5V83.5M1581.5 62.5V83.5" stroke="#b3bcc8"/><rect x="1570" y="66" width="11" height="13" fill="#5a8ad8"/>
<path d="M1564 83.5V86.5H1575V83.5" fill="none" stroke="#8d98a8"/>
<text x="1576" y="102.5" font-size="11" fill="#15428b" text-anchor="middle" font-weight="normal" font-style="normal">Biçim</text>
<path d="M1574.0 110.25H1579.0L1576.5 112.75Z" fill="#3e5a8a"/>
<path d="M1614 60H1624V62.5H1623L1622 61.5H1617.5L1620.5 65L1617 68.5H1622.5L1623.5 67H1624.5V70H1614V69L1618.2 65L1614 61Z" fill="#111"/>
<text x="1631.5" y="69" font-size="11" fill="#15428b" text-anchor="start" font-weight="normal" font-style="normal" textLength="86.5" lengthAdjust="spacingAndGlyphs">Otomatik Toplam</text>
<path d="M1724.0 63.25H1729.0L1726.5 65.75Z" fill="#3e5a8a"/>
<rect x="1613.5" y="80.5" width="11" height="14" fill="#dfe8f5" stroke="#3a5aa0"/><path d="M1613.5 82.5H1624.5" stroke="#3a5aa0"/><path d="M1619 84V90M1616 88L1619 92L1622 88" fill="#2f6ad0" stroke="#2f6ad0" stroke-width="1.8"/>
<text x="1631.5" y="90.5" font-size="11" fill="#15428b" text-anchor="start" font-weight="normal" font-style="normal">Dolgu</text>
<path d="M1667.0 85.25H1672.0L1669.5 87.75Z" fill="#3e5a8a"/>
<path d="M1614 111L1622 103.5L1626.5 107.5L1619 114.5H1616Z" fill="#f0f2f5" stroke="#333" stroke-width="0.9"/><path d="M1618 115.5H1628" stroke="#111"/>
<text x="1631.5" y="113" font-size="11" fill="#15428b" text-anchor="start" font-weight="normal" font-style="normal">Temizle</text>
<path d="M1673.0 107.25H1678.0L1675.5 109.75Z" fill="#3e5a8a"/>
<path d="M1766 63.5H1785L1777.5 72.5V84L1772.5 81V72.5Z" fill="#b9bcc0" stroke="#7d8288" stroke-width="0.8"/><path d="M1768 64.5H1783L1776 72H1774Z" fill="#e3e5e8"/>
<text x="1755.5" y="70.5" font-family="Liberation Serif" font-weight="bold" font-size="14" fill="#3d5fae">A</text><text x="1755" y="86" font-family="Liberation Serif" font-weight="bold" font-size="16" fill="#b5403a">Z</text>
<text x="1770.5" y="103" font-size="11" fill="#15428b" text-anchor="middle" font-weight="normal" font-style="normal">Sırala ve Filtre</text>
<text x="1764" y="115.5" font-size="11" fill="#15428b" text-anchor="middle" font-weight="normal" font-style="normal">Uygula</text>
<path d="M1787.0 111.25H1792.0L1789.5 113.75Z" fill="#3e5a8a"/>
<defs><linearGradient id="bin" x1="0" y1="0" x2="1" y2="0"><stop offset="0" stop-color="#5d6d8c"/><stop offset="0.35" stop-color="#c9d3e4"/><stop offset="1" stop-color="#4a5873"/></linearGradient></defs>
<rect x="1818.5" y="59.5" width="5" height="4" rx="1" fill="url(#bin)" stroke="#3a4660" stroke-width="0.7"/><rect x="1832.5" y="59.5" width="5" height="4" rx="1" fill="url(#bin)" stroke="#3a4660" stroke-width="0.7"/>
<path d="M1817 64H1825V70H1817ZM1831 64H1839V70H1831Z" fill="url(#bin)" stroke="#3a4660" stroke-width="0.7"/>
<path d="M1815.5 70.5H1826.5V83.5Q1821 85 1815.5 83.5ZM1829.5 70.5H1840.5V83.5Q1835 85 1829.5 83.5Z" fill="url(#bin)" stroke="#3a4660" stroke-width="0.8"/><rect x="1825" y="66" width="6" height="6" fill="#55627c"/>
<text x="1829.5" y="103" font-size="11" fill="#15428b" text-anchor="middle" font-weight="normal" font-style="normal">Bul ve</text>
<text x="1826" y="115.5" font-size="11" fill="#15428b" text-anchor="middle" font-weight="normal" font-style="normal">Seç</text>
<path d="M1838.0 111.25H1843.0L1840.5 113.75Z" fill="#3e5a8a"/></svg>

</body></html>
